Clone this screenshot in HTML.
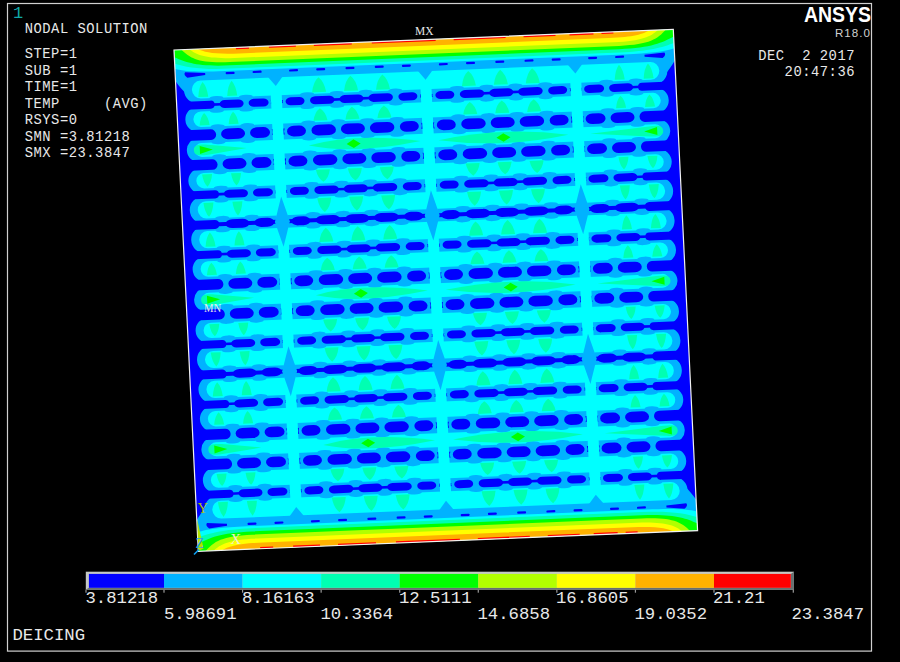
<!DOCTYPE html>
<html><head><meta charset="utf-8"><style>
html,body{margin:0;padding:0;background:#000;}
body{width:900px;height:662px;position:relative;overflow:hidden;}
.t{position:absolute;font-family:"Liberation Mono",monospace;color:#E8E8E8;white-space:pre;line-height:1;}
.h{font-size:13.8px;letter-spacing:0.52px;}
.l{font-size:17.3px;}
</style></head><body>
<svg width="900" height="662" style="position:absolute;left:0;top:0">
<defs><clipPath id="cp"><rect x="0" y="0" width="500" height="500"/></clipPath></defs>
<rect x="7.5" y="3.5" width="864" height="647.6" fill="none" stroke="#D0D0D0" stroke-width="1.2"/>
<g transform="matrix(0.9986,-0.0414,0.0486,1.0026,174,50)">
<g clip-path="url(#cp)">
<rect x="0.0" y="0.0" width="500.0" height="500.0" fill="#0000FF"/>
<rect x="8.0" y="26.5" width="484.0" height="27.9" fill="#00B2FF" rx="13.9" ry="13.9"/>
<rect x="8.0" y="57.4" width="484.0" height="25.4" fill="#00B2FF" rx="12.7" ry="12.7"/>
<rect x="8.0" y="88.7" width="484.0" height="23.9" fill="#00B2FF" rx="11.9" ry="11.9"/>
<rect x="8.0" y="118.6" width="484.0" height="25.4" fill="#00B2FF" rx="12.7" ry="12.7"/>
<rect x="8.0" y="146.9" width="484.0" height="27.1" fill="#00B2FF" rx="13.5" ry="13.5"/>
<rect x="8.0" y="176.6" width="484.0" height="27.1" fill="#00B2FF" rx="13.5" ry="13.5"/>
<rect x="8.0" y="206.7" width="484.0" height="25.4" fill="#00B2FF" rx="12.7" ry="12.7"/>
<rect x="8.0" y="238.0" width="484.0" height="23.9" fill="#00B2FF" rx="11.9" ry="11.9"/>
<rect x="8.0" y="267.9" width="484.0" height="25.4" fill="#00B2FF" rx="12.7" ry="12.7"/>
<rect x="8.0" y="296.2" width="484.0" height="27.1" fill="#00B2FF" rx="13.5" ry="13.5"/>
<rect x="8.0" y="325.9" width="484.0" height="27.1" fill="#00B2FF" rx="13.5" ry="13.5"/>
<rect x="8.0" y="356.0" width="484.0" height="25.4" fill="#00B2FF" rx="12.7" ry="12.7"/>
<rect x="8.0" y="387.3" width="484.0" height="23.9" fill="#00B2FF" rx="11.9" ry="11.9"/>
<rect x="8.0" y="417.2" width="484.0" height="25.4" fill="#00B2FF" rx="12.7" ry="12.7"/>
<rect x="8.0" y="445.5" width="484.0" height="27.9" fill="#00B2FF" rx="13.9" ry="13.9"/>
<rect x="20.0" y="49.4" width="74.5" height="13.0" fill="#00B2FF" rx="8.0" ry="6.5"/>
<rect x="106.0" y="49.4" width="138.0" height="13.0" fill="#00B2FF" rx="8.0" ry="6.5"/>
<rect x="256.0" y="49.4" width="138.0" height="13.0" fill="#00B2FF" rx="8.0" ry="6.5"/>
<rect x="405.5" y="49.4" width="74.5" height="13.0" fill="#00B2FF" rx="8.0" ry="6.5"/>
<rect x="20.0" y="77.7" width="74.5" height="16.0" fill="#00B2FF" rx="8.0" ry="8.0"/>
<rect x="106.0" y="77.7" width="138.0" height="16.0" fill="#00B2FF" rx="8.0" ry="8.0"/>
<rect x="256.0" y="77.7" width="138.0" height="16.0" fill="#00B2FF" rx="8.0" ry="8.0"/>
<rect x="405.5" y="77.7" width="74.5" height="16.0" fill="#00B2FF" rx="8.0" ry="8.0"/>
<rect x="20.0" y="107.6" width="74.5" height="16.0" fill="#00B2FF" rx="8.0" ry="8.0"/>
<rect x="106.0" y="107.6" width="138.0" height="16.0" fill="#00B2FF" rx="8.0" ry="8.0"/>
<rect x="256.0" y="107.6" width="138.0" height="16.0" fill="#00B2FF" rx="8.0" ry="8.0"/>
<rect x="405.5" y="107.6" width="74.5" height="16.0" fill="#00B2FF" rx="8.0" ry="8.0"/>
<rect x="20.0" y="138.9" width="74.5" height="13.0" fill="#00B2FF" rx="8.0" ry="6.5"/>
<rect x="106.0" y="138.9" width="138.0" height="13.0" fill="#00B2FF" rx="8.0" ry="6.5"/>
<rect x="256.0" y="138.9" width="138.0" height="13.0" fill="#00B2FF" rx="8.0" ry="6.5"/>
<rect x="405.5" y="138.9" width="74.5" height="13.0" fill="#00B2FF" rx="8.0" ry="6.5"/>
<rect x="20.0" y="169.0" width="74.5" height="12.6" fill="#00B2FF" rx="8.0" ry="6.3"/>
<rect x="106.0" y="169.0" width="138.0" height="12.6" fill="#00B2FF" rx="8.0" ry="6.3"/>
<rect x="256.0" y="169.0" width="138.0" height="12.6" fill="#00B2FF" rx="8.0" ry="6.3"/>
<rect x="405.5" y="169.0" width="74.5" height="12.6" fill="#00B2FF" rx="8.0" ry="6.3"/>
<rect x="20.0" y="198.7" width="74.5" height="13.0" fill="#00B2FF" rx="8.0" ry="6.5"/>
<rect x="106.0" y="198.7" width="138.0" height="13.0" fill="#00B2FF" rx="8.0" ry="6.5"/>
<rect x="256.0" y="198.7" width="138.0" height="13.0" fill="#00B2FF" rx="8.0" ry="6.5"/>
<rect x="405.5" y="198.7" width="74.5" height="13.0" fill="#00B2FF" rx="8.0" ry="6.5"/>
<rect x="20.0" y="227.0" width="74.5" height="16.0" fill="#00B2FF" rx="8.0" ry="8.0"/>
<rect x="106.0" y="227.0" width="138.0" height="16.0" fill="#00B2FF" rx="8.0" ry="8.0"/>
<rect x="256.0" y="227.0" width="138.0" height="16.0" fill="#00B2FF" rx="8.0" ry="8.0"/>
<rect x="405.5" y="227.0" width="74.5" height="16.0" fill="#00B2FF" rx="8.0" ry="8.0"/>
<rect x="20.0" y="256.9" width="74.5" height="16.0" fill="#00B2FF" rx="8.0" ry="8.0"/>
<rect x="106.0" y="256.9" width="138.0" height="16.0" fill="#00B2FF" rx="8.0" ry="8.0"/>
<rect x="256.0" y="256.9" width="138.0" height="16.0" fill="#00B2FF" rx="8.0" ry="8.0"/>
<rect x="405.5" y="256.9" width="74.5" height="16.0" fill="#00B2FF" rx="8.0" ry="8.0"/>
<rect x="20.0" y="288.2" width="74.5" height="13.0" fill="#00B2FF" rx="8.0" ry="6.5"/>
<rect x="106.0" y="288.2" width="138.0" height="13.0" fill="#00B2FF" rx="8.0" ry="6.5"/>
<rect x="256.0" y="288.2" width="138.0" height="13.0" fill="#00B2FF" rx="8.0" ry="6.5"/>
<rect x="405.5" y="288.2" width="74.5" height="13.0" fill="#00B2FF" rx="8.0" ry="6.5"/>
<rect x="20.0" y="318.3" width="74.5" height="12.6" fill="#00B2FF" rx="8.0" ry="6.3"/>
<rect x="106.0" y="318.3" width="138.0" height="12.6" fill="#00B2FF" rx="8.0" ry="6.3"/>
<rect x="256.0" y="318.3" width="138.0" height="12.6" fill="#00B2FF" rx="8.0" ry="6.3"/>
<rect x="405.5" y="318.3" width="74.5" height="12.6" fill="#00B2FF" rx="8.0" ry="6.3"/>
<rect x="20.0" y="348.0" width="74.5" height="13.0" fill="#00B2FF" rx="8.0" ry="6.5"/>
<rect x="106.0" y="348.0" width="138.0" height="13.0" fill="#00B2FF" rx="8.0" ry="6.5"/>
<rect x="256.0" y="348.0" width="138.0" height="13.0" fill="#00B2FF" rx="8.0" ry="6.5"/>
<rect x="405.5" y="348.0" width="74.5" height="13.0" fill="#00B2FF" rx="8.0" ry="6.5"/>
<rect x="20.0" y="376.3" width="74.5" height="16.0" fill="#00B2FF" rx="8.0" ry="8.0"/>
<rect x="106.0" y="376.3" width="138.0" height="16.0" fill="#00B2FF" rx="8.0" ry="8.0"/>
<rect x="256.0" y="376.3" width="138.0" height="16.0" fill="#00B2FF" rx="8.0" ry="8.0"/>
<rect x="405.5" y="376.3" width="74.5" height="16.0" fill="#00B2FF" rx="8.0" ry="8.0"/>
<rect x="20.0" y="406.2" width="74.5" height="16.0" fill="#00B2FF" rx="8.0" ry="8.0"/>
<rect x="106.0" y="406.2" width="138.0" height="16.0" fill="#00B2FF" rx="8.0" ry="8.0"/>
<rect x="256.0" y="406.2" width="138.0" height="16.0" fill="#00B2FF" rx="8.0" ry="8.0"/>
<rect x="405.5" y="406.2" width="74.5" height="16.0" fill="#00B2FF" rx="8.0" ry="8.0"/>
<rect x="20.0" y="437.5" width="74.5" height="13.0" fill="#00B2FF" rx="8.0" ry="6.5"/>
<rect x="106.0" y="437.5" width="138.0" height="13.0" fill="#00B2FF" rx="8.0" ry="6.5"/>
<rect x="256.0" y="437.5" width="138.0" height="13.0" fill="#00B2FF" rx="8.0" ry="6.5"/>
<rect x="405.5" y="437.5" width="74.5" height="13.0" fill="#00B2FF" rx="8.0" ry="6.5"/>
<rect x="0.0" y="0.0" width="500.0" height="31.0" fill="#00B2FF"/>
<rect x="0.0" y="469.0" width="500.0" height="31.0" fill="#00B2FF"/>
<path d="M0,29 L0,31 C3,36 7,41 11,45 L30,45 L30,29 Z M500,29 L500,31 C497,36 493,41 489,45 L470,45 L470,29 Z" fill="#00B2FF"/>
<path d="M0,29 L0,31 C3,36 7,41 11,45 L30,45 L30,29 Z M500,29 L500,31 C497,36 493,41 489,45 L470,45 L470,29 Z" fill="#00B2FF" transform="matrix(1,0,0,-1,0,500)"/>
<rect x="43.0" y="51.9" width="24.0" height="8.0" fill="#0000FF" rx="5.2" ry="4.0"/>
<rect x="72.0" y="51.9" width="20.0" height="8.0" fill="#0000FF" rx="5.2" ry="4.0"/>
<rect x="109.0" y="51.9" width="19.0" height="8.0" fill="#0000FF" rx="5.2" ry="4.0"/>
<rect x="133.5" y="51.9" width="24.5" height="8.0" fill="#0000FF" rx="5.2" ry="4.0"/>
<rect x="163.0" y="51.9" width="24.0" height="8.0" fill="#0000FF" rx="5.2" ry="4.0"/>
<rect x="192.0" y="51.9" width="24.5" height="8.0" fill="#0000FF" rx="5.2" ry="4.0"/>
<rect x="222.0" y="51.9" width="19.0" height="8.0" fill="#0000FF" rx="5.2" ry="4.0"/>
<rect x="259.0" y="51.9" width="19.0" height="8.0" fill="#0000FF" rx="5.2" ry="4.0"/>
<rect x="283.5" y="51.9" width="24.5" height="8.0" fill="#0000FF" rx="5.2" ry="4.0"/>
<rect x="313.0" y="51.9" width="24.0" height="8.0" fill="#0000FF" rx="5.2" ry="4.0"/>
<rect x="342.0" y="51.9" width="24.5" height="8.0" fill="#0000FF" rx="5.2" ry="4.0"/>
<rect x="372.0" y="51.9" width="19.0" height="8.0" fill="#0000FF" rx="5.2" ry="4.0"/>
<rect x="408.0" y="51.9" width="20.0" height="8.0" fill="#0000FF" rx="5.2" ry="4.0"/>
<rect x="433.0" y="51.9" width="24.0" height="8.0" fill="#0000FF" rx="5.2" ry="4.0"/>
<rect x="-10.0" y="51.9" width="48.0" height="8.0" fill="#0000FF" rx="4.0" ry="4.0"/>
<rect x="462.0" y="51.9" width="48.0" height="8.0" fill="#0000FF" rx="4.0" ry="4.0"/>
<rect x="156.0" y="54.6" width="9.0" height="2.6" fill="#0000FF"/>
<rect x="185.0" y="54.6" width="9.0" height="2.6" fill="#0000FF"/>
<rect x="306.0" y="54.6" width="9.0" height="2.6" fill="#0000FF"/>
<rect x="335.0" y="54.6" width="9.0" height="2.6" fill="#0000FF"/>
<rect x="35.0" y="54.6" width="10.0" height="2.6" fill="#0000FF"/>
<rect x="455.0" y="54.6" width="10.0" height="2.6" fill="#0000FF"/>
<rect x="43.0" y="80.4" width="24.0" height="10.6" fill="#0000FF" rx="6.9" ry="5.3"/>
<rect x="72.0" y="80.4" width="20.0" height="10.6" fill="#0000FF" rx="6.9" ry="5.3"/>
<rect x="109.0" y="80.4" width="19.0" height="10.6" fill="#0000FF" rx="6.9" ry="5.3"/>
<rect x="133.5" y="80.4" width="24.5" height="10.6" fill="#0000FF" rx="6.9" ry="5.3"/>
<rect x="163.0" y="80.4" width="24.0" height="10.6" fill="#0000FF" rx="6.9" ry="5.3"/>
<rect x="192.0" y="80.4" width="24.5" height="10.6" fill="#0000FF" rx="6.9" ry="5.3"/>
<rect x="222.0" y="80.4" width="19.0" height="10.6" fill="#0000FF" rx="6.9" ry="5.3"/>
<rect x="259.0" y="80.4" width="19.0" height="10.6" fill="#0000FF" rx="6.9" ry="5.3"/>
<rect x="283.5" y="80.4" width="24.5" height="10.6" fill="#0000FF" rx="6.9" ry="5.3"/>
<rect x="313.0" y="80.4" width="24.0" height="10.6" fill="#0000FF" rx="6.9" ry="5.3"/>
<rect x="342.0" y="80.4" width="24.5" height="10.6" fill="#0000FF" rx="6.9" ry="5.3"/>
<rect x="372.0" y="80.4" width="19.0" height="10.6" fill="#0000FF" rx="6.9" ry="5.3"/>
<rect x="408.0" y="80.4" width="20.0" height="10.6" fill="#0000FF" rx="6.9" ry="5.3"/>
<rect x="433.0" y="80.4" width="24.0" height="10.6" fill="#0000FF" rx="6.9" ry="5.3"/>
<rect x="-10.0" y="80.4" width="48.0" height="10.6" fill="#0000FF" rx="5.3" ry="5.3"/>
<rect x="462.0" y="80.4" width="48.0" height="10.6" fill="#0000FF" rx="5.3" ry="5.3"/>
<rect x="43.0" y="110.3" width="24.0" height="10.6" fill="#0000FF" rx="6.9" ry="5.3"/>
<rect x="72.0" y="110.3" width="20.0" height="10.6" fill="#0000FF" rx="6.9" ry="5.3"/>
<rect x="109.0" y="110.3" width="19.0" height="10.6" fill="#0000FF" rx="6.9" ry="5.3"/>
<rect x="133.5" y="110.3" width="24.5" height="10.6" fill="#0000FF" rx="6.9" ry="5.3"/>
<rect x="163.0" y="110.3" width="24.0" height="10.6" fill="#0000FF" rx="6.9" ry="5.3"/>
<rect x="192.0" y="110.3" width="24.5" height="10.6" fill="#0000FF" rx="6.9" ry="5.3"/>
<rect x="222.0" y="110.3" width="19.0" height="10.6" fill="#0000FF" rx="6.9" ry="5.3"/>
<rect x="259.0" y="110.3" width="19.0" height="10.6" fill="#0000FF" rx="6.9" ry="5.3"/>
<rect x="283.5" y="110.3" width="24.5" height="10.6" fill="#0000FF" rx="6.9" ry="5.3"/>
<rect x="313.0" y="110.3" width="24.0" height="10.6" fill="#0000FF" rx="6.9" ry="5.3"/>
<rect x="342.0" y="110.3" width="24.5" height="10.6" fill="#0000FF" rx="6.9" ry="5.3"/>
<rect x="372.0" y="110.3" width="19.0" height="10.6" fill="#0000FF" rx="6.9" ry="5.3"/>
<rect x="408.0" y="110.3" width="20.0" height="10.6" fill="#0000FF" rx="6.9" ry="5.3"/>
<rect x="433.0" y="110.3" width="24.0" height="10.6" fill="#0000FF" rx="6.9" ry="5.3"/>
<rect x="-10.0" y="110.3" width="48.0" height="10.6" fill="#0000FF" rx="5.3" ry="5.3"/>
<rect x="462.0" y="110.3" width="48.0" height="10.6" fill="#0000FF" rx="5.3" ry="5.3"/>
<rect x="43.0" y="141.4" width="24.0" height="8.0" fill="#0000FF" rx="5.2" ry="4.0"/>
<rect x="72.0" y="141.4" width="20.0" height="8.0" fill="#0000FF" rx="5.2" ry="4.0"/>
<rect x="109.0" y="141.4" width="19.0" height="8.0" fill="#0000FF" rx="5.2" ry="4.0"/>
<rect x="133.5" y="141.4" width="24.5" height="8.0" fill="#0000FF" rx="5.2" ry="4.0"/>
<rect x="163.0" y="141.4" width="24.0" height="8.0" fill="#0000FF" rx="5.2" ry="4.0"/>
<rect x="192.0" y="141.4" width="24.5" height="8.0" fill="#0000FF" rx="5.2" ry="4.0"/>
<rect x="222.0" y="141.4" width="19.0" height="8.0" fill="#0000FF" rx="5.2" ry="4.0"/>
<rect x="259.0" y="141.4" width="19.0" height="8.0" fill="#0000FF" rx="5.2" ry="4.0"/>
<rect x="283.5" y="141.4" width="24.5" height="8.0" fill="#0000FF" rx="5.2" ry="4.0"/>
<rect x="313.0" y="141.4" width="24.0" height="8.0" fill="#0000FF" rx="5.2" ry="4.0"/>
<rect x="342.0" y="141.4" width="24.5" height="8.0" fill="#0000FF" rx="5.2" ry="4.0"/>
<rect x="372.0" y="141.4" width="19.0" height="8.0" fill="#0000FF" rx="5.2" ry="4.0"/>
<rect x="408.0" y="141.4" width="20.0" height="8.0" fill="#0000FF" rx="5.2" ry="4.0"/>
<rect x="433.0" y="141.4" width="24.0" height="8.0" fill="#0000FF" rx="5.2" ry="4.0"/>
<rect x="-10.0" y="141.4" width="48.0" height="8.0" fill="#0000FF" rx="4.0" ry="4.0"/>
<rect x="462.0" y="141.4" width="48.0" height="8.0" fill="#0000FF" rx="4.0" ry="4.0"/>
<rect x="156.0" y="144.1" width="9.0" height="2.6" fill="#0000FF"/>
<rect x="185.0" y="144.1" width="9.0" height="2.6" fill="#0000FF"/>
<rect x="306.0" y="144.1" width="9.0" height="2.6" fill="#0000FF"/>
<rect x="335.0" y="144.1" width="9.0" height="2.6" fill="#0000FF"/>
<rect x="35.0" y="144.1" width="10.0" height="2.6" fill="#0000FF"/>
<rect x="455.0" y="144.1" width="10.0" height="2.6" fill="#0000FF"/>
<rect x="0.0" y="173.3" width="94.0" height="4.0" fill="#0000FF"/>
<rect x="106.0" y="173.3" width="138.0" height="4.0" fill="#0000FF"/>
<rect x="256.0" y="173.3" width="138.0" height="4.0" fill="#0000FF"/>
<rect x="406.0" y="173.3" width="94.0" height="4.0" fill="#0000FF"/>
<rect x="43.0" y="170.9" width="24.0" height="8.8" fill="#0000FF" rx="7.0" ry="4.4"/>
<rect x="72.0" y="170.9" width="20.0" height="8.8" fill="#0000FF" rx="7.0" ry="4.4"/>
<rect x="109.0" y="170.9" width="19.0" height="8.8" fill="#0000FF" rx="7.0" ry="4.4"/>
<rect x="133.5" y="170.9" width="24.5" height="8.8" fill="#0000FF" rx="7.0" ry="4.4"/>
<rect x="163.0" y="170.9" width="24.0" height="8.8" fill="#0000FF" rx="7.0" ry="4.4"/>
<rect x="192.0" y="170.9" width="24.5" height="8.8" fill="#0000FF" rx="7.0" ry="4.4"/>
<rect x="222.0" y="170.9" width="19.0" height="8.8" fill="#0000FF" rx="7.0" ry="4.4"/>
<rect x="259.0" y="170.9" width="19.0" height="8.8" fill="#0000FF" rx="7.0" ry="4.4"/>
<rect x="283.5" y="170.9" width="24.5" height="8.8" fill="#0000FF" rx="7.0" ry="4.4"/>
<rect x="313.0" y="170.9" width="24.0" height="8.8" fill="#0000FF" rx="7.0" ry="4.4"/>
<rect x="342.0" y="170.9" width="24.5" height="8.8" fill="#0000FF" rx="7.0" ry="4.4"/>
<rect x="372.0" y="170.9" width="19.0" height="8.8" fill="#0000FF" rx="7.0" ry="4.4"/>
<rect x="408.0" y="170.9" width="20.0" height="8.8" fill="#0000FF" rx="7.0" ry="4.4"/>
<rect x="433.0" y="170.9" width="24.0" height="8.8" fill="#0000FF" rx="7.0" ry="4.4"/>
<rect x="-10.0" y="170.8" width="47.0" height="9.0" fill="#0000FF" rx="4.5" ry="4.5"/>
<rect x="463.0" y="170.8" width="47.0" height="9.0" fill="#0000FF" rx="4.5" ry="4.5"/>
<rect x="43.0" y="201.2" width="24.0" height="8.0" fill="#0000FF" rx="5.2" ry="4.0"/>
<rect x="72.0" y="201.2" width="20.0" height="8.0" fill="#0000FF" rx="5.2" ry="4.0"/>
<rect x="109.0" y="201.2" width="19.0" height="8.0" fill="#0000FF" rx="5.2" ry="4.0"/>
<rect x="133.5" y="201.2" width="24.5" height="8.0" fill="#0000FF" rx="5.2" ry="4.0"/>
<rect x="163.0" y="201.2" width="24.0" height="8.0" fill="#0000FF" rx="5.2" ry="4.0"/>
<rect x="192.0" y="201.2" width="24.5" height="8.0" fill="#0000FF" rx="5.2" ry="4.0"/>
<rect x="222.0" y="201.2" width="19.0" height="8.0" fill="#0000FF" rx="5.2" ry="4.0"/>
<rect x="259.0" y="201.2" width="19.0" height="8.0" fill="#0000FF" rx="5.2" ry="4.0"/>
<rect x="283.5" y="201.2" width="24.5" height="8.0" fill="#0000FF" rx="5.2" ry="4.0"/>
<rect x="313.0" y="201.2" width="24.0" height="8.0" fill="#0000FF" rx="5.2" ry="4.0"/>
<rect x="342.0" y="201.2" width="24.5" height="8.0" fill="#0000FF" rx="5.2" ry="4.0"/>
<rect x="372.0" y="201.2" width="19.0" height="8.0" fill="#0000FF" rx="5.2" ry="4.0"/>
<rect x="408.0" y="201.2" width="20.0" height="8.0" fill="#0000FF" rx="5.2" ry="4.0"/>
<rect x="433.0" y="201.2" width="24.0" height="8.0" fill="#0000FF" rx="5.2" ry="4.0"/>
<rect x="-10.0" y="201.2" width="48.0" height="8.0" fill="#0000FF" rx="4.0" ry="4.0"/>
<rect x="462.0" y="201.2" width="48.0" height="8.0" fill="#0000FF" rx="4.0" ry="4.0"/>
<rect x="156.0" y="203.9" width="9.0" height="2.6" fill="#0000FF"/>
<rect x="185.0" y="203.9" width="9.0" height="2.6" fill="#0000FF"/>
<rect x="306.0" y="203.9" width="9.0" height="2.6" fill="#0000FF"/>
<rect x="335.0" y="203.9" width="9.0" height="2.6" fill="#0000FF"/>
<rect x="35.0" y="203.9" width="10.0" height="2.6" fill="#0000FF"/>
<rect x="455.0" y="203.9" width="10.0" height="2.6" fill="#0000FF"/>
<rect x="43.0" y="229.7" width="24.0" height="10.6" fill="#0000FF" rx="6.9" ry="5.3"/>
<rect x="72.0" y="229.7" width="20.0" height="10.6" fill="#0000FF" rx="6.9" ry="5.3"/>
<rect x="109.0" y="229.7" width="19.0" height="10.6" fill="#0000FF" rx="6.9" ry="5.3"/>
<rect x="133.5" y="229.7" width="24.5" height="10.6" fill="#0000FF" rx="6.9" ry="5.3"/>
<rect x="163.0" y="229.7" width="24.0" height="10.6" fill="#0000FF" rx="6.9" ry="5.3"/>
<rect x="192.0" y="229.7" width="24.5" height="10.6" fill="#0000FF" rx="6.9" ry="5.3"/>
<rect x="222.0" y="229.7" width="19.0" height="10.6" fill="#0000FF" rx="6.9" ry="5.3"/>
<rect x="259.0" y="229.7" width="19.0" height="10.6" fill="#0000FF" rx="6.9" ry="5.3"/>
<rect x="283.5" y="229.7" width="24.5" height="10.6" fill="#0000FF" rx="6.9" ry="5.3"/>
<rect x="313.0" y="229.7" width="24.0" height="10.6" fill="#0000FF" rx="6.9" ry="5.3"/>
<rect x="342.0" y="229.7" width="24.5" height="10.6" fill="#0000FF" rx="6.9" ry="5.3"/>
<rect x="372.0" y="229.7" width="19.0" height="10.6" fill="#0000FF" rx="6.9" ry="5.3"/>
<rect x="408.0" y="229.7" width="20.0" height="10.6" fill="#0000FF" rx="6.9" ry="5.3"/>
<rect x="433.0" y="229.7" width="24.0" height="10.6" fill="#0000FF" rx="6.9" ry="5.3"/>
<rect x="-10.0" y="229.7" width="48.0" height="10.6" fill="#0000FF" rx="5.3" ry="5.3"/>
<rect x="462.0" y="229.7" width="48.0" height="10.6" fill="#0000FF" rx="5.3" ry="5.3"/>
<rect x="43.0" y="259.6" width="24.0" height="10.6" fill="#0000FF" rx="6.9" ry="5.3"/>
<rect x="72.0" y="259.6" width="20.0" height="10.6" fill="#0000FF" rx="6.9" ry="5.3"/>
<rect x="109.0" y="259.6" width="19.0" height="10.6" fill="#0000FF" rx="6.9" ry="5.3"/>
<rect x="133.5" y="259.6" width="24.5" height="10.6" fill="#0000FF" rx="6.9" ry="5.3"/>
<rect x="163.0" y="259.6" width="24.0" height="10.6" fill="#0000FF" rx="6.9" ry="5.3"/>
<rect x="192.0" y="259.6" width="24.5" height="10.6" fill="#0000FF" rx="6.9" ry="5.3"/>
<rect x="222.0" y="259.6" width="19.0" height="10.6" fill="#0000FF" rx="6.9" ry="5.3"/>
<rect x="259.0" y="259.6" width="19.0" height="10.6" fill="#0000FF" rx="6.9" ry="5.3"/>
<rect x="283.5" y="259.6" width="24.5" height="10.6" fill="#0000FF" rx="6.9" ry="5.3"/>
<rect x="313.0" y="259.6" width="24.0" height="10.6" fill="#0000FF" rx="6.9" ry="5.3"/>
<rect x="342.0" y="259.6" width="24.5" height="10.6" fill="#0000FF" rx="6.9" ry="5.3"/>
<rect x="372.0" y="259.6" width="19.0" height="10.6" fill="#0000FF" rx="6.9" ry="5.3"/>
<rect x="408.0" y="259.6" width="20.0" height="10.6" fill="#0000FF" rx="6.9" ry="5.3"/>
<rect x="433.0" y="259.6" width="24.0" height="10.6" fill="#0000FF" rx="6.9" ry="5.3"/>
<rect x="-10.0" y="259.6" width="48.0" height="10.6" fill="#0000FF" rx="5.3" ry="5.3"/>
<rect x="462.0" y="259.6" width="48.0" height="10.6" fill="#0000FF" rx="5.3" ry="5.3"/>
<rect x="43.0" y="290.7" width="24.0" height="8.0" fill="#0000FF" rx="5.2" ry="4.0"/>
<rect x="72.0" y="290.7" width="20.0" height="8.0" fill="#0000FF" rx="5.2" ry="4.0"/>
<rect x="109.0" y="290.7" width="19.0" height="8.0" fill="#0000FF" rx="5.2" ry="4.0"/>
<rect x="133.5" y="290.7" width="24.5" height="8.0" fill="#0000FF" rx="5.2" ry="4.0"/>
<rect x="163.0" y="290.7" width="24.0" height="8.0" fill="#0000FF" rx="5.2" ry="4.0"/>
<rect x="192.0" y="290.7" width="24.5" height="8.0" fill="#0000FF" rx="5.2" ry="4.0"/>
<rect x="222.0" y="290.7" width="19.0" height="8.0" fill="#0000FF" rx="5.2" ry="4.0"/>
<rect x="259.0" y="290.7" width="19.0" height="8.0" fill="#0000FF" rx="5.2" ry="4.0"/>
<rect x="283.5" y="290.7" width="24.5" height="8.0" fill="#0000FF" rx="5.2" ry="4.0"/>
<rect x="313.0" y="290.7" width="24.0" height="8.0" fill="#0000FF" rx="5.2" ry="4.0"/>
<rect x="342.0" y="290.7" width="24.5" height="8.0" fill="#0000FF" rx="5.2" ry="4.0"/>
<rect x="372.0" y="290.7" width="19.0" height="8.0" fill="#0000FF" rx="5.2" ry="4.0"/>
<rect x="408.0" y="290.7" width="20.0" height="8.0" fill="#0000FF" rx="5.2" ry="4.0"/>
<rect x="433.0" y="290.7" width="24.0" height="8.0" fill="#0000FF" rx="5.2" ry="4.0"/>
<rect x="-10.0" y="290.7" width="48.0" height="8.0" fill="#0000FF" rx="4.0" ry="4.0"/>
<rect x="462.0" y="290.7" width="48.0" height="8.0" fill="#0000FF" rx="4.0" ry="4.0"/>
<rect x="156.0" y="293.4" width="9.0" height="2.6" fill="#0000FF"/>
<rect x="185.0" y="293.4" width="9.0" height="2.6" fill="#0000FF"/>
<rect x="306.0" y="293.4" width="9.0" height="2.6" fill="#0000FF"/>
<rect x="335.0" y="293.4" width="9.0" height="2.6" fill="#0000FF"/>
<rect x="35.0" y="293.4" width="10.0" height="2.6" fill="#0000FF"/>
<rect x="455.0" y="293.4" width="10.0" height="2.6" fill="#0000FF"/>
<rect x="0.0" y="322.6" width="94.0" height="4.0" fill="#0000FF"/>
<rect x="106.0" y="322.6" width="138.0" height="4.0" fill="#0000FF"/>
<rect x="256.0" y="322.6" width="138.0" height="4.0" fill="#0000FF"/>
<rect x="406.0" y="322.6" width="94.0" height="4.0" fill="#0000FF"/>
<rect x="43.0" y="320.2" width="24.0" height="8.8" fill="#0000FF" rx="7.0" ry="4.4"/>
<rect x="72.0" y="320.2" width="20.0" height="8.8" fill="#0000FF" rx="7.0" ry="4.4"/>
<rect x="109.0" y="320.2" width="19.0" height="8.8" fill="#0000FF" rx="7.0" ry="4.4"/>
<rect x="133.5" y="320.2" width="24.5" height="8.8" fill="#0000FF" rx="7.0" ry="4.4"/>
<rect x="163.0" y="320.2" width="24.0" height="8.8" fill="#0000FF" rx="7.0" ry="4.4"/>
<rect x="192.0" y="320.2" width="24.5" height="8.8" fill="#0000FF" rx="7.0" ry="4.4"/>
<rect x="222.0" y="320.2" width="19.0" height="8.8" fill="#0000FF" rx="7.0" ry="4.4"/>
<rect x="259.0" y="320.2" width="19.0" height="8.8" fill="#0000FF" rx="7.0" ry="4.4"/>
<rect x="283.5" y="320.2" width="24.5" height="8.8" fill="#0000FF" rx="7.0" ry="4.4"/>
<rect x="313.0" y="320.2" width="24.0" height="8.8" fill="#0000FF" rx="7.0" ry="4.4"/>
<rect x="342.0" y="320.2" width="24.5" height="8.8" fill="#0000FF" rx="7.0" ry="4.4"/>
<rect x="372.0" y="320.2" width="19.0" height="8.8" fill="#0000FF" rx="7.0" ry="4.4"/>
<rect x="408.0" y="320.2" width="20.0" height="8.8" fill="#0000FF" rx="7.0" ry="4.4"/>
<rect x="433.0" y="320.2" width="24.0" height="8.8" fill="#0000FF" rx="7.0" ry="4.4"/>
<rect x="-10.0" y="320.1" width="47.0" height="9.0" fill="#0000FF" rx="4.5" ry="4.5"/>
<rect x="463.0" y="320.1" width="47.0" height="9.0" fill="#0000FF" rx="4.5" ry="4.5"/>
<rect x="43.0" y="350.5" width="24.0" height="8.0" fill="#0000FF" rx="5.2" ry="4.0"/>
<rect x="72.0" y="350.5" width="20.0" height="8.0" fill="#0000FF" rx="5.2" ry="4.0"/>
<rect x="109.0" y="350.5" width="19.0" height="8.0" fill="#0000FF" rx="5.2" ry="4.0"/>
<rect x="133.5" y="350.5" width="24.5" height="8.0" fill="#0000FF" rx="5.2" ry="4.0"/>
<rect x="163.0" y="350.5" width="24.0" height="8.0" fill="#0000FF" rx="5.2" ry="4.0"/>
<rect x="192.0" y="350.5" width="24.5" height="8.0" fill="#0000FF" rx="5.2" ry="4.0"/>
<rect x="222.0" y="350.5" width="19.0" height="8.0" fill="#0000FF" rx="5.2" ry="4.0"/>
<rect x="259.0" y="350.5" width="19.0" height="8.0" fill="#0000FF" rx="5.2" ry="4.0"/>
<rect x="283.5" y="350.5" width="24.5" height="8.0" fill="#0000FF" rx="5.2" ry="4.0"/>
<rect x="313.0" y="350.5" width="24.0" height="8.0" fill="#0000FF" rx="5.2" ry="4.0"/>
<rect x="342.0" y="350.5" width="24.5" height="8.0" fill="#0000FF" rx="5.2" ry="4.0"/>
<rect x="372.0" y="350.5" width="19.0" height="8.0" fill="#0000FF" rx="5.2" ry="4.0"/>
<rect x="408.0" y="350.5" width="20.0" height="8.0" fill="#0000FF" rx="5.2" ry="4.0"/>
<rect x="433.0" y="350.5" width="24.0" height="8.0" fill="#0000FF" rx="5.2" ry="4.0"/>
<rect x="-10.0" y="350.5" width="48.0" height="8.0" fill="#0000FF" rx="4.0" ry="4.0"/>
<rect x="462.0" y="350.5" width="48.0" height="8.0" fill="#0000FF" rx="4.0" ry="4.0"/>
<rect x="156.0" y="353.2" width="9.0" height="2.6" fill="#0000FF"/>
<rect x="185.0" y="353.2" width="9.0" height="2.6" fill="#0000FF"/>
<rect x="306.0" y="353.2" width="9.0" height="2.6" fill="#0000FF"/>
<rect x="335.0" y="353.2" width="9.0" height="2.6" fill="#0000FF"/>
<rect x="35.0" y="353.2" width="10.0" height="2.6" fill="#0000FF"/>
<rect x="455.0" y="353.2" width="10.0" height="2.6" fill="#0000FF"/>
<rect x="43.0" y="379.0" width="24.0" height="10.6" fill="#0000FF" rx="6.9" ry="5.3"/>
<rect x="72.0" y="379.0" width="20.0" height="10.6" fill="#0000FF" rx="6.9" ry="5.3"/>
<rect x="109.0" y="379.0" width="19.0" height="10.6" fill="#0000FF" rx="6.9" ry="5.3"/>
<rect x="133.5" y="379.0" width="24.5" height="10.6" fill="#0000FF" rx="6.9" ry="5.3"/>
<rect x="163.0" y="379.0" width="24.0" height="10.6" fill="#0000FF" rx="6.9" ry="5.3"/>
<rect x="192.0" y="379.0" width="24.5" height="10.6" fill="#0000FF" rx="6.9" ry="5.3"/>
<rect x="222.0" y="379.0" width="19.0" height="10.6" fill="#0000FF" rx="6.9" ry="5.3"/>
<rect x="259.0" y="379.0" width="19.0" height="10.6" fill="#0000FF" rx="6.9" ry="5.3"/>
<rect x="283.5" y="379.0" width="24.5" height="10.6" fill="#0000FF" rx="6.9" ry="5.3"/>
<rect x="313.0" y="379.0" width="24.0" height="10.6" fill="#0000FF" rx="6.9" ry="5.3"/>
<rect x="342.0" y="379.0" width="24.5" height="10.6" fill="#0000FF" rx="6.9" ry="5.3"/>
<rect x="372.0" y="379.0" width="19.0" height="10.6" fill="#0000FF" rx="6.9" ry="5.3"/>
<rect x="408.0" y="379.0" width="20.0" height="10.6" fill="#0000FF" rx="6.9" ry="5.3"/>
<rect x="433.0" y="379.0" width="24.0" height="10.6" fill="#0000FF" rx="6.9" ry="5.3"/>
<rect x="-10.0" y="379.0" width="48.0" height="10.6" fill="#0000FF" rx="5.3" ry="5.3"/>
<rect x="462.0" y="379.0" width="48.0" height="10.6" fill="#0000FF" rx="5.3" ry="5.3"/>
<rect x="43.0" y="408.9" width="24.0" height="10.6" fill="#0000FF" rx="6.9" ry="5.3"/>
<rect x="72.0" y="408.9" width="20.0" height="10.6" fill="#0000FF" rx="6.9" ry="5.3"/>
<rect x="109.0" y="408.9" width="19.0" height="10.6" fill="#0000FF" rx="6.9" ry="5.3"/>
<rect x="133.5" y="408.9" width="24.5" height="10.6" fill="#0000FF" rx="6.9" ry="5.3"/>
<rect x="163.0" y="408.9" width="24.0" height="10.6" fill="#0000FF" rx="6.9" ry="5.3"/>
<rect x="192.0" y="408.9" width="24.5" height="10.6" fill="#0000FF" rx="6.9" ry="5.3"/>
<rect x="222.0" y="408.9" width="19.0" height="10.6" fill="#0000FF" rx="6.9" ry="5.3"/>
<rect x="259.0" y="408.9" width="19.0" height="10.6" fill="#0000FF" rx="6.9" ry="5.3"/>
<rect x="283.5" y="408.9" width="24.5" height="10.6" fill="#0000FF" rx="6.9" ry="5.3"/>
<rect x="313.0" y="408.9" width="24.0" height="10.6" fill="#0000FF" rx="6.9" ry="5.3"/>
<rect x="342.0" y="408.9" width="24.5" height="10.6" fill="#0000FF" rx="6.9" ry="5.3"/>
<rect x="372.0" y="408.9" width="19.0" height="10.6" fill="#0000FF" rx="6.9" ry="5.3"/>
<rect x="408.0" y="408.9" width="20.0" height="10.6" fill="#0000FF" rx="6.9" ry="5.3"/>
<rect x="433.0" y="408.9" width="24.0" height="10.6" fill="#0000FF" rx="6.9" ry="5.3"/>
<rect x="-10.0" y="408.9" width="48.0" height="10.6" fill="#0000FF" rx="5.3" ry="5.3"/>
<rect x="462.0" y="408.9" width="48.0" height="10.6" fill="#0000FF" rx="5.3" ry="5.3"/>
<rect x="43.0" y="440.0" width="24.0" height="8.0" fill="#0000FF" rx="5.2" ry="4.0"/>
<rect x="72.0" y="440.0" width="20.0" height="8.0" fill="#0000FF" rx="5.2" ry="4.0"/>
<rect x="109.0" y="440.0" width="19.0" height="8.0" fill="#0000FF" rx="5.2" ry="4.0"/>
<rect x="133.5" y="440.0" width="24.5" height="8.0" fill="#0000FF" rx="5.2" ry="4.0"/>
<rect x="163.0" y="440.0" width="24.0" height="8.0" fill="#0000FF" rx="5.2" ry="4.0"/>
<rect x="192.0" y="440.0" width="24.5" height="8.0" fill="#0000FF" rx="5.2" ry="4.0"/>
<rect x="222.0" y="440.0" width="19.0" height="8.0" fill="#0000FF" rx="5.2" ry="4.0"/>
<rect x="259.0" y="440.0" width="19.0" height="8.0" fill="#0000FF" rx="5.2" ry="4.0"/>
<rect x="283.5" y="440.0" width="24.5" height="8.0" fill="#0000FF" rx="5.2" ry="4.0"/>
<rect x="313.0" y="440.0" width="24.0" height="8.0" fill="#0000FF" rx="5.2" ry="4.0"/>
<rect x="342.0" y="440.0" width="24.5" height="8.0" fill="#0000FF" rx="5.2" ry="4.0"/>
<rect x="372.0" y="440.0" width="19.0" height="8.0" fill="#0000FF" rx="5.2" ry="4.0"/>
<rect x="408.0" y="440.0" width="20.0" height="8.0" fill="#0000FF" rx="5.2" ry="4.0"/>
<rect x="433.0" y="440.0" width="24.0" height="8.0" fill="#0000FF" rx="5.2" ry="4.0"/>
<rect x="-10.0" y="440.0" width="48.0" height="8.0" fill="#0000FF" rx="4.0" ry="4.0"/>
<rect x="462.0" y="440.0" width="48.0" height="8.0" fill="#0000FF" rx="4.0" ry="4.0"/>
<rect x="156.0" y="442.7" width="9.0" height="2.6" fill="#0000FF"/>
<rect x="185.0" y="442.7" width="9.0" height="2.6" fill="#0000FF"/>
<rect x="306.0" y="442.7" width="9.0" height="2.6" fill="#0000FF"/>
<rect x="335.0" y="442.7" width="9.0" height="2.6" fill="#0000FF"/>
<rect x="35.0" y="442.7" width="10.0" height="2.6" fill="#0000FF"/>
<rect x="455.0" y="442.7" width="10.0" height="2.6" fill="#0000FF"/>
<rect x="50.5" y="24.1" width="9.0" height="2.2" fill="#0000FF" rx="1.0" ry="1.0"/>
<rect x="77.5" y="24.1" width="9.0" height="2.2" fill="#0000FF" rx="1.0" ry="1.0"/>
<rect x="114.0" y="24.1" width="9.0" height="2.2" fill="#0000FF" rx="1.0" ry="1.0"/>
<rect x="141.2" y="24.1" width="9.0" height="2.2" fill="#0000FF" rx="1.0" ry="1.0"/>
<rect x="170.5" y="24.1" width="9.0" height="2.2" fill="#0000FF" rx="1.0" ry="1.0"/>
<rect x="199.8" y="24.1" width="9.0" height="2.2" fill="#0000FF" rx="1.0" ry="1.0"/>
<rect x="227.0" y="24.1" width="9.0" height="2.2" fill="#0000FF" rx="1.0" ry="1.0"/>
<rect x="264.0" y="24.1" width="9.0" height="2.2" fill="#0000FF" rx="1.0" ry="1.0"/>
<rect x="291.2" y="24.1" width="9.0" height="2.2" fill="#0000FF" rx="1.0" ry="1.0"/>
<rect x="320.5" y="24.1" width="9.0" height="2.2" fill="#0000FF" rx="1.0" ry="1.0"/>
<rect x="349.8" y="24.1" width="9.0" height="2.2" fill="#0000FF" rx="1.0" ry="1.0"/>
<rect x="377.0" y="24.1" width="9.0" height="2.2" fill="#0000FF" rx="1.0" ry="1.0"/>
<rect x="413.5" y="24.1" width="9.0" height="2.2" fill="#0000FF" rx="1.0" ry="1.0"/>
<rect x="440.5" y="24.1" width="9.0" height="2.2" fill="#0000FF" rx="1.0" ry="1.0"/>
<path d="M10,22.7 L30,24.2 L30,26.2 L12,28.2 Q8,25.2 10,22.7Z" fill="#0000FF"/>
<path d="M490,22.7 L470,24.2 L470,26.2 L488,28.2 Q492,25.2 490,22.7Z" fill="#0000FF"/>
<rect x="50.5" y="473.7" width="9.0" height="2.2" fill="#0000FF" rx="1.0" ry="1.0"/>
<rect x="77.5" y="473.7" width="9.0" height="2.2" fill="#0000FF" rx="1.0" ry="1.0"/>
<rect x="114.0" y="473.7" width="9.0" height="2.2" fill="#0000FF" rx="1.0" ry="1.0"/>
<rect x="141.2" y="473.7" width="9.0" height="2.2" fill="#0000FF" rx="1.0" ry="1.0"/>
<rect x="170.5" y="473.7" width="9.0" height="2.2" fill="#0000FF" rx="1.0" ry="1.0"/>
<rect x="199.8" y="473.7" width="9.0" height="2.2" fill="#0000FF" rx="1.0" ry="1.0"/>
<rect x="227.0" y="473.7" width="9.0" height="2.2" fill="#0000FF" rx="1.0" ry="1.0"/>
<rect x="264.0" y="473.7" width="9.0" height="2.2" fill="#0000FF" rx="1.0" ry="1.0"/>
<rect x="291.2" y="473.7" width="9.0" height="2.2" fill="#0000FF" rx="1.0" ry="1.0"/>
<rect x="320.5" y="473.7" width="9.0" height="2.2" fill="#0000FF" rx="1.0" ry="1.0"/>
<rect x="349.8" y="473.7" width="9.0" height="2.2" fill="#0000FF" rx="1.0" ry="1.0"/>
<rect x="377.0" y="473.7" width="9.0" height="2.2" fill="#0000FF" rx="1.0" ry="1.0"/>
<rect x="413.5" y="473.7" width="9.0" height="2.2" fill="#0000FF" rx="1.0" ry="1.0"/>
<rect x="440.5" y="473.7" width="9.0" height="2.2" fill="#0000FF" rx="1.0" ry="1.0"/>
<path d="M10,472.3 L30,473.8 L30,475.8 L12,477.8 Q8,474.8 10,472.3Z" fill="#0000FF"/>
<path d="M490,472.3 L470,473.8 L470,475.8 L488,477.8 Q492,474.8 490,472.3Z" fill="#0000FF"/>
<rect x="16.0" y="31.5" width="468.0" height="17.9" fill="#00FFFF" rx="8.9" ry="8.9"/>
<rect x="16.0" y="62.4" width="468.0" height="15.4" fill="#00FFFF" rx="7.7" ry="7.7"/>
<rect x="16.0" y="93.7" width="468.0" height="13.9" fill="#00FFFF" rx="6.9" ry="6.9"/>
<rect x="16.0" y="123.6" width="468.0" height="15.4" fill="#00FFFF" rx="7.7" ry="7.7"/>
<rect x="16.0" y="151.9" width="468.0" height="17.1" fill="#00FFFF" rx="8.5" ry="8.5"/>
<rect x="16.0" y="181.6" width="468.0" height="17.1" fill="#00FFFF" rx="8.5" ry="8.5"/>
<rect x="16.0" y="211.7" width="468.0" height="15.4" fill="#00FFFF" rx="7.7" ry="7.7"/>
<rect x="16.0" y="243.0" width="468.0" height="13.9" fill="#00FFFF" rx="6.9" ry="6.9"/>
<rect x="16.0" y="272.9" width="468.0" height="15.4" fill="#00FFFF" rx="7.7" ry="7.7"/>
<rect x="16.0" y="301.2" width="468.0" height="17.1" fill="#00FFFF" rx="8.5" ry="8.5"/>
<rect x="16.0" y="330.9" width="468.0" height="17.1" fill="#00FFFF" rx="8.5" ry="8.5"/>
<rect x="16.0" y="361.0" width="468.0" height="15.4" fill="#00FFFF" rx="7.7" ry="7.7"/>
<rect x="16.0" y="392.3" width="468.0" height="13.9" fill="#00FFFF" rx="6.9" ry="6.9"/>
<rect x="16.0" y="422.2" width="468.0" height="15.4" fill="#00FFFF" rx="7.7" ry="7.7"/>
<rect x="16.0" y="450.5" width="468.0" height="17.9" fill="#00FFFF" rx="8.9" ry="8.9"/>
<ellipse cx="40.0" cy="49.4" rx="7" ry="1.9" fill="#00B2FF"/>
<ellipse cx="40.0" cy="62.4" rx="7" ry="1.9" fill="#00B2FF"/>
<ellipse cx="69.5" cy="49.4" rx="7" ry="1.9" fill="#00B2FF"/>
<ellipse cx="69.5" cy="62.4" rx="7" ry="1.9" fill="#00B2FF"/>
<ellipse cx="130.8" cy="49.4" rx="7" ry="1.9" fill="#00B2FF"/>
<ellipse cx="130.8" cy="62.4" rx="7" ry="1.9" fill="#00B2FF"/>
<ellipse cx="160.5" cy="49.4" rx="7" ry="1.9" fill="#00B2FF"/>
<ellipse cx="160.5" cy="62.4" rx="7" ry="1.9" fill="#00B2FF"/>
<ellipse cx="189.5" cy="49.4" rx="7" ry="1.9" fill="#00B2FF"/>
<ellipse cx="189.5" cy="62.4" rx="7" ry="1.9" fill="#00B2FF"/>
<ellipse cx="219.2" cy="49.4" rx="7" ry="1.9" fill="#00B2FF"/>
<ellipse cx="219.2" cy="62.4" rx="7" ry="1.9" fill="#00B2FF"/>
<ellipse cx="280.8" cy="49.4" rx="7" ry="1.9" fill="#00B2FF"/>
<ellipse cx="280.8" cy="62.4" rx="7" ry="1.9" fill="#00B2FF"/>
<ellipse cx="310.5" cy="49.4" rx="7" ry="1.9" fill="#00B2FF"/>
<ellipse cx="310.5" cy="62.4" rx="7" ry="1.9" fill="#00B2FF"/>
<ellipse cx="339.5" cy="49.4" rx="7" ry="1.9" fill="#00B2FF"/>
<ellipse cx="339.5" cy="62.4" rx="7" ry="1.9" fill="#00B2FF"/>
<ellipse cx="369.2" cy="49.4" rx="7" ry="1.9" fill="#00B2FF"/>
<ellipse cx="369.2" cy="62.4" rx="7" ry="1.9" fill="#00B2FF"/>
<ellipse cx="430.5" cy="49.4" rx="7" ry="1.9" fill="#00B2FF"/>
<ellipse cx="430.5" cy="62.4" rx="7" ry="1.9" fill="#00B2FF"/>
<ellipse cx="460.0" cy="49.4" rx="7" ry="1.9" fill="#00B2FF"/>
<ellipse cx="460.0" cy="62.4" rx="7" ry="1.9" fill="#00B2FF"/>
<ellipse cx="40.0" cy="77.7" rx="7" ry="1.9" fill="#00B2FF"/>
<ellipse cx="40.0" cy="93.7" rx="7" ry="1.9" fill="#00B2FF"/>
<ellipse cx="69.5" cy="77.7" rx="7" ry="1.9" fill="#00B2FF"/>
<ellipse cx="69.5" cy="93.7" rx="7" ry="1.9" fill="#00B2FF"/>
<ellipse cx="130.8" cy="77.7" rx="7" ry="1.9" fill="#00B2FF"/>
<ellipse cx="130.8" cy="93.7" rx="7" ry="1.9" fill="#00B2FF"/>
<ellipse cx="160.5" cy="77.7" rx="7" ry="1.9" fill="#00B2FF"/>
<ellipse cx="160.5" cy="93.7" rx="7" ry="1.9" fill="#00B2FF"/>
<ellipse cx="189.5" cy="77.7" rx="7" ry="1.9" fill="#00B2FF"/>
<ellipse cx="189.5" cy="93.7" rx="7" ry="1.9" fill="#00B2FF"/>
<ellipse cx="219.2" cy="77.7" rx="7" ry="1.9" fill="#00B2FF"/>
<ellipse cx="219.2" cy="93.7" rx="7" ry="1.9" fill="#00B2FF"/>
<ellipse cx="280.8" cy="77.7" rx="7" ry="1.9" fill="#00B2FF"/>
<ellipse cx="280.8" cy="93.7" rx="7" ry="1.9" fill="#00B2FF"/>
<ellipse cx="310.5" cy="77.7" rx="7" ry="1.9" fill="#00B2FF"/>
<ellipse cx="310.5" cy="93.7" rx="7" ry="1.9" fill="#00B2FF"/>
<ellipse cx="339.5" cy="77.7" rx="7" ry="1.9" fill="#00B2FF"/>
<ellipse cx="339.5" cy="93.7" rx="7" ry="1.9" fill="#00B2FF"/>
<ellipse cx="369.2" cy="77.7" rx="7" ry="1.9" fill="#00B2FF"/>
<ellipse cx="369.2" cy="93.7" rx="7" ry="1.9" fill="#00B2FF"/>
<ellipse cx="430.5" cy="77.7" rx="7" ry="1.9" fill="#00B2FF"/>
<ellipse cx="430.5" cy="93.7" rx="7" ry="1.9" fill="#00B2FF"/>
<ellipse cx="460.0" cy="77.7" rx="7" ry="1.9" fill="#00B2FF"/>
<ellipse cx="460.0" cy="93.7" rx="7" ry="1.9" fill="#00B2FF"/>
<ellipse cx="40.0" cy="107.6" rx="7" ry="1.9" fill="#00B2FF"/>
<ellipse cx="40.0" cy="123.6" rx="7" ry="1.9" fill="#00B2FF"/>
<ellipse cx="69.5" cy="107.6" rx="7" ry="1.9" fill="#00B2FF"/>
<ellipse cx="69.5" cy="123.6" rx="7" ry="1.9" fill="#00B2FF"/>
<ellipse cx="130.8" cy="107.6" rx="7" ry="1.9" fill="#00B2FF"/>
<ellipse cx="130.8" cy="123.6" rx="7" ry="1.9" fill="#00B2FF"/>
<ellipse cx="160.5" cy="107.6" rx="7" ry="1.9" fill="#00B2FF"/>
<ellipse cx="160.5" cy="123.6" rx="7" ry="1.9" fill="#00B2FF"/>
<ellipse cx="189.5" cy="107.6" rx="7" ry="1.9" fill="#00B2FF"/>
<ellipse cx="189.5" cy="123.6" rx="7" ry="1.9" fill="#00B2FF"/>
<ellipse cx="219.2" cy="107.6" rx="7" ry="1.9" fill="#00B2FF"/>
<ellipse cx="219.2" cy="123.6" rx="7" ry="1.9" fill="#00B2FF"/>
<ellipse cx="280.8" cy="107.6" rx="7" ry="1.9" fill="#00B2FF"/>
<ellipse cx="280.8" cy="123.6" rx="7" ry="1.9" fill="#00B2FF"/>
<ellipse cx="310.5" cy="107.6" rx="7" ry="1.9" fill="#00B2FF"/>
<ellipse cx="310.5" cy="123.6" rx="7" ry="1.9" fill="#00B2FF"/>
<ellipse cx="339.5" cy="107.6" rx="7" ry="1.9" fill="#00B2FF"/>
<ellipse cx="339.5" cy="123.6" rx="7" ry="1.9" fill="#00B2FF"/>
<ellipse cx="369.2" cy="107.6" rx="7" ry="1.9" fill="#00B2FF"/>
<ellipse cx="369.2" cy="123.6" rx="7" ry="1.9" fill="#00B2FF"/>
<ellipse cx="430.5" cy="107.6" rx="7" ry="1.9" fill="#00B2FF"/>
<ellipse cx="430.5" cy="123.6" rx="7" ry="1.9" fill="#00B2FF"/>
<ellipse cx="460.0" cy="107.6" rx="7" ry="1.9" fill="#00B2FF"/>
<ellipse cx="460.0" cy="123.6" rx="7" ry="1.9" fill="#00B2FF"/>
<ellipse cx="40.0" cy="138.9" rx="7" ry="1.9" fill="#00B2FF"/>
<ellipse cx="40.0" cy="151.9" rx="7" ry="1.9" fill="#00B2FF"/>
<ellipse cx="69.5" cy="138.9" rx="7" ry="1.9" fill="#00B2FF"/>
<ellipse cx="69.5" cy="151.9" rx="7" ry="1.9" fill="#00B2FF"/>
<ellipse cx="130.8" cy="138.9" rx="7" ry="1.9" fill="#00B2FF"/>
<ellipse cx="130.8" cy="151.9" rx="7" ry="1.9" fill="#00B2FF"/>
<ellipse cx="160.5" cy="138.9" rx="7" ry="1.9" fill="#00B2FF"/>
<ellipse cx="160.5" cy="151.9" rx="7" ry="1.9" fill="#00B2FF"/>
<ellipse cx="189.5" cy="138.9" rx="7" ry="1.9" fill="#00B2FF"/>
<ellipse cx="189.5" cy="151.9" rx="7" ry="1.9" fill="#00B2FF"/>
<ellipse cx="219.2" cy="138.9" rx="7" ry="1.9" fill="#00B2FF"/>
<ellipse cx="219.2" cy="151.9" rx="7" ry="1.9" fill="#00B2FF"/>
<ellipse cx="280.8" cy="138.9" rx="7" ry="1.9" fill="#00B2FF"/>
<ellipse cx="280.8" cy="151.9" rx="7" ry="1.9" fill="#00B2FF"/>
<ellipse cx="310.5" cy="138.9" rx="7" ry="1.9" fill="#00B2FF"/>
<ellipse cx="310.5" cy="151.9" rx="7" ry="1.9" fill="#00B2FF"/>
<ellipse cx="339.5" cy="138.9" rx="7" ry="1.9" fill="#00B2FF"/>
<ellipse cx="339.5" cy="151.9" rx="7" ry="1.9" fill="#00B2FF"/>
<ellipse cx="369.2" cy="138.9" rx="7" ry="1.9" fill="#00B2FF"/>
<ellipse cx="369.2" cy="151.9" rx="7" ry="1.9" fill="#00B2FF"/>
<ellipse cx="430.5" cy="138.9" rx="7" ry="1.9" fill="#00B2FF"/>
<ellipse cx="430.5" cy="151.9" rx="7" ry="1.9" fill="#00B2FF"/>
<ellipse cx="460.0" cy="138.9" rx="7" ry="1.9" fill="#00B2FF"/>
<ellipse cx="460.0" cy="151.9" rx="7" ry="1.9" fill="#00B2FF"/>
<ellipse cx="40.0" cy="169.0" rx="7" ry="1.9" fill="#00B2FF"/>
<ellipse cx="40.0" cy="181.6" rx="7" ry="1.9" fill="#00B2FF"/>
<ellipse cx="69.5" cy="169.0" rx="7" ry="1.9" fill="#00B2FF"/>
<ellipse cx="69.5" cy="181.6" rx="7" ry="1.9" fill="#00B2FF"/>
<ellipse cx="130.8" cy="169.0" rx="7" ry="1.9" fill="#00B2FF"/>
<ellipse cx="130.8" cy="181.6" rx="7" ry="1.9" fill="#00B2FF"/>
<ellipse cx="160.5" cy="169.0" rx="7" ry="1.9" fill="#00B2FF"/>
<ellipse cx="160.5" cy="181.6" rx="7" ry="1.9" fill="#00B2FF"/>
<ellipse cx="189.5" cy="169.0" rx="7" ry="1.9" fill="#00B2FF"/>
<ellipse cx="189.5" cy="181.6" rx="7" ry="1.9" fill="#00B2FF"/>
<ellipse cx="219.2" cy="169.0" rx="7" ry="1.9" fill="#00B2FF"/>
<ellipse cx="219.2" cy="181.6" rx="7" ry="1.9" fill="#00B2FF"/>
<ellipse cx="280.8" cy="169.0" rx="7" ry="1.9" fill="#00B2FF"/>
<ellipse cx="280.8" cy="181.6" rx="7" ry="1.9" fill="#00B2FF"/>
<ellipse cx="310.5" cy="169.0" rx="7" ry="1.9" fill="#00B2FF"/>
<ellipse cx="310.5" cy="181.6" rx="7" ry="1.9" fill="#00B2FF"/>
<ellipse cx="339.5" cy="169.0" rx="7" ry="1.9" fill="#00B2FF"/>
<ellipse cx="339.5" cy="181.6" rx="7" ry="1.9" fill="#00B2FF"/>
<ellipse cx="369.2" cy="169.0" rx="7" ry="1.9" fill="#00B2FF"/>
<ellipse cx="369.2" cy="181.6" rx="7" ry="1.9" fill="#00B2FF"/>
<ellipse cx="430.5" cy="169.0" rx="7" ry="1.9" fill="#00B2FF"/>
<ellipse cx="430.5" cy="181.6" rx="7" ry="1.9" fill="#00B2FF"/>
<ellipse cx="460.0" cy="169.0" rx="7" ry="1.9" fill="#00B2FF"/>
<ellipse cx="460.0" cy="181.6" rx="7" ry="1.9" fill="#00B2FF"/>
<ellipse cx="40.0" cy="198.7" rx="7" ry="1.9" fill="#00B2FF"/>
<ellipse cx="40.0" cy="211.7" rx="7" ry="1.9" fill="#00B2FF"/>
<ellipse cx="69.5" cy="198.7" rx="7" ry="1.9" fill="#00B2FF"/>
<ellipse cx="69.5" cy="211.7" rx="7" ry="1.9" fill="#00B2FF"/>
<ellipse cx="130.8" cy="198.7" rx="7" ry="1.9" fill="#00B2FF"/>
<ellipse cx="130.8" cy="211.7" rx="7" ry="1.9" fill="#00B2FF"/>
<ellipse cx="160.5" cy="198.7" rx="7" ry="1.9" fill="#00B2FF"/>
<ellipse cx="160.5" cy="211.7" rx="7" ry="1.9" fill="#00B2FF"/>
<ellipse cx="189.5" cy="198.7" rx="7" ry="1.9" fill="#00B2FF"/>
<ellipse cx="189.5" cy="211.7" rx="7" ry="1.9" fill="#00B2FF"/>
<ellipse cx="219.2" cy="198.7" rx="7" ry="1.9" fill="#00B2FF"/>
<ellipse cx="219.2" cy="211.7" rx="7" ry="1.9" fill="#00B2FF"/>
<ellipse cx="280.8" cy="198.7" rx="7" ry="1.9" fill="#00B2FF"/>
<ellipse cx="280.8" cy="211.7" rx="7" ry="1.9" fill="#00B2FF"/>
<ellipse cx="310.5" cy="198.7" rx="7" ry="1.9" fill="#00B2FF"/>
<ellipse cx="310.5" cy="211.7" rx="7" ry="1.9" fill="#00B2FF"/>
<ellipse cx="339.5" cy="198.7" rx="7" ry="1.9" fill="#00B2FF"/>
<ellipse cx="339.5" cy="211.7" rx="7" ry="1.9" fill="#00B2FF"/>
<ellipse cx="369.2" cy="198.7" rx="7" ry="1.9" fill="#00B2FF"/>
<ellipse cx="369.2" cy="211.7" rx="7" ry="1.9" fill="#00B2FF"/>
<ellipse cx="430.5" cy="198.7" rx="7" ry="1.9" fill="#00B2FF"/>
<ellipse cx="430.5" cy="211.7" rx="7" ry="1.9" fill="#00B2FF"/>
<ellipse cx="460.0" cy="198.7" rx="7" ry="1.9" fill="#00B2FF"/>
<ellipse cx="460.0" cy="211.7" rx="7" ry="1.9" fill="#00B2FF"/>
<ellipse cx="40.0" cy="227.0" rx="7" ry="1.9" fill="#00B2FF"/>
<ellipse cx="40.0" cy="243.0" rx="7" ry="1.9" fill="#00B2FF"/>
<ellipse cx="69.5" cy="227.0" rx="7" ry="1.9" fill="#00B2FF"/>
<ellipse cx="69.5" cy="243.0" rx="7" ry="1.9" fill="#00B2FF"/>
<ellipse cx="130.8" cy="227.0" rx="7" ry="1.9" fill="#00B2FF"/>
<ellipse cx="130.8" cy="243.0" rx="7" ry="1.9" fill="#00B2FF"/>
<ellipse cx="160.5" cy="227.0" rx="7" ry="1.9" fill="#00B2FF"/>
<ellipse cx="160.5" cy="243.0" rx="7" ry="1.9" fill="#00B2FF"/>
<ellipse cx="189.5" cy="227.0" rx="7" ry="1.9" fill="#00B2FF"/>
<ellipse cx="189.5" cy="243.0" rx="7" ry="1.9" fill="#00B2FF"/>
<ellipse cx="219.2" cy="227.0" rx="7" ry="1.9" fill="#00B2FF"/>
<ellipse cx="219.2" cy="243.0" rx="7" ry="1.9" fill="#00B2FF"/>
<ellipse cx="280.8" cy="227.0" rx="7" ry="1.9" fill="#00B2FF"/>
<ellipse cx="280.8" cy="243.0" rx="7" ry="1.9" fill="#00B2FF"/>
<ellipse cx="310.5" cy="227.0" rx="7" ry="1.9" fill="#00B2FF"/>
<ellipse cx="310.5" cy="243.0" rx="7" ry="1.9" fill="#00B2FF"/>
<ellipse cx="339.5" cy="227.0" rx="7" ry="1.9" fill="#00B2FF"/>
<ellipse cx="339.5" cy="243.0" rx="7" ry="1.9" fill="#00B2FF"/>
<ellipse cx="369.2" cy="227.0" rx="7" ry="1.9" fill="#00B2FF"/>
<ellipse cx="369.2" cy="243.0" rx="7" ry="1.9" fill="#00B2FF"/>
<ellipse cx="430.5" cy="227.0" rx="7" ry="1.9" fill="#00B2FF"/>
<ellipse cx="430.5" cy="243.0" rx="7" ry="1.9" fill="#00B2FF"/>
<ellipse cx="460.0" cy="227.0" rx="7" ry="1.9" fill="#00B2FF"/>
<ellipse cx="460.0" cy="243.0" rx="7" ry="1.9" fill="#00B2FF"/>
<ellipse cx="40.0" cy="256.9" rx="7" ry="1.9" fill="#00B2FF"/>
<ellipse cx="40.0" cy="272.9" rx="7" ry="1.9" fill="#00B2FF"/>
<ellipse cx="69.5" cy="256.9" rx="7" ry="1.9" fill="#00B2FF"/>
<ellipse cx="69.5" cy="272.9" rx="7" ry="1.9" fill="#00B2FF"/>
<ellipse cx="130.8" cy="256.9" rx="7" ry="1.9" fill="#00B2FF"/>
<ellipse cx="130.8" cy="272.9" rx="7" ry="1.9" fill="#00B2FF"/>
<ellipse cx="160.5" cy="256.9" rx="7" ry="1.9" fill="#00B2FF"/>
<ellipse cx="160.5" cy="272.9" rx="7" ry="1.9" fill="#00B2FF"/>
<ellipse cx="189.5" cy="256.9" rx="7" ry="1.9" fill="#00B2FF"/>
<ellipse cx="189.5" cy="272.9" rx="7" ry="1.9" fill="#00B2FF"/>
<ellipse cx="219.2" cy="256.9" rx="7" ry="1.9" fill="#00B2FF"/>
<ellipse cx="219.2" cy="272.9" rx="7" ry="1.9" fill="#00B2FF"/>
<ellipse cx="280.8" cy="256.9" rx="7" ry="1.9" fill="#00B2FF"/>
<ellipse cx="280.8" cy="272.9" rx="7" ry="1.9" fill="#00B2FF"/>
<ellipse cx="310.5" cy="256.9" rx="7" ry="1.9" fill="#00B2FF"/>
<ellipse cx="310.5" cy="272.9" rx="7" ry="1.9" fill="#00B2FF"/>
<ellipse cx="339.5" cy="256.9" rx="7" ry="1.9" fill="#00B2FF"/>
<ellipse cx="339.5" cy="272.9" rx="7" ry="1.9" fill="#00B2FF"/>
<ellipse cx="369.2" cy="256.9" rx="7" ry="1.9" fill="#00B2FF"/>
<ellipse cx="369.2" cy="272.9" rx="7" ry="1.9" fill="#00B2FF"/>
<ellipse cx="430.5" cy="256.9" rx="7" ry="1.9" fill="#00B2FF"/>
<ellipse cx="430.5" cy="272.9" rx="7" ry="1.9" fill="#00B2FF"/>
<ellipse cx="460.0" cy="256.9" rx="7" ry="1.9" fill="#00B2FF"/>
<ellipse cx="460.0" cy="272.9" rx="7" ry="1.9" fill="#00B2FF"/>
<ellipse cx="40.0" cy="288.2" rx="7" ry="1.9" fill="#00B2FF"/>
<ellipse cx="40.0" cy="301.2" rx="7" ry="1.9" fill="#00B2FF"/>
<ellipse cx="69.5" cy="288.2" rx="7" ry="1.9" fill="#00B2FF"/>
<ellipse cx="69.5" cy="301.2" rx="7" ry="1.9" fill="#00B2FF"/>
<ellipse cx="130.8" cy="288.2" rx="7" ry="1.9" fill="#00B2FF"/>
<ellipse cx="130.8" cy="301.2" rx="7" ry="1.9" fill="#00B2FF"/>
<ellipse cx="160.5" cy="288.2" rx="7" ry="1.9" fill="#00B2FF"/>
<ellipse cx="160.5" cy="301.2" rx="7" ry="1.9" fill="#00B2FF"/>
<ellipse cx="189.5" cy="288.2" rx="7" ry="1.9" fill="#00B2FF"/>
<ellipse cx="189.5" cy="301.2" rx="7" ry="1.9" fill="#00B2FF"/>
<ellipse cx="219.2" cy="288.2" rx="7" ry="1.9" fill="#00B2FF"/>
<ellipse cx="219.2" cy="301.2" rx="7" ry="1.9" fill="#00B2FF"/>
<ellipse cx="280.8" cy="288.2" rx="7" ry="1.9" fill="#00B2FF"/>
<ellipse cx="280.8" cy="301.2" rx="7" ry="1.9" fill="#00B2FF"/>
<ellipse cx="310.5" cy="288.2" rx="7" ry="1.9" fill="#00B2FF"/>
<ellipse cx="310.5" cy="301.2" rx="7" ry="1.9" fill="#00B2FF"/>
<ellipse cx="339.5" cy="288.2" rx="7" ry="1.9" fill="#00B2FF"/>
<ellipse cx="339.5" cy="301.2" rx="7" ry="1.9" fill="#00B2FF"/>
<ellipse cx="369.2" cy="288.2" rx="7" ry="1.9" fill="#00B2FF"/>
<ellipse cx="369.2" cy="301.2" rx="7" ry="1.9" fill="#00B2FF"/>
<ellipse cx="430.5" cy="288.2" rx="7" ry="1.9" fill="#00B2FF"/>
<ellipse cx="430.5" cy="301.2" rx="7" ry="1.9" fill="#00B2FF"/>
<ellipse cx="460.0" cy="288.2" rx="7" ry="1.9" fill="#00B2FF"/>
<ellipse cx="460.0" cy="301.2" rx="7" ry="1.9" fill="#00B2FF"/>
<ellipse cx="40.0" cy="318.3" rx="7" ry="1.9" fill="#00B2FF"/>
<ellipse cx="40.0" cy="330.9" rx="7" ry="1.9" fill="#00B2FF"/>
<ellipse cx="69.5" cy="318.3" rx="7" ry="1.9" fill="#00B2FF"/>
<ellipse cx="69.5" cy="330.9" rx="7" ry="1.9" fill="#00B2FF"/>
<ellipse cx="130.8" cy="318.3" rx="7" ry="1.9" fill="#00B2FF"/>
<ellipse cx="130.8" cy="330.9" rx="7" ry="1.9" fill="#00B2FF"/>
<ellipse cx="160.5" cy="318.3" rx="7" ry="1.9" fill="#00B2FF"/>
<ellipse cx="160.5" cy="330.9" rx="7" ry="1.9" fill="#00B2FF"/>
<ellipse cx="189.5" cy="318.3" rx="7" ry="1.9" fill="#00B2FF"/>
<ellipse cx="189.5" cy="330.9" rx="7" ry="1.9" fill="#00B2FF"/>
<ellipse cx="219.2" cy="318.3" rx="7" ry="1.9" fill="#00B2FF"/>
<ellipse cx="219.2" cy="330.9" rx="7" ry="1.9" fill="#00B2FF"/>
<ellipse cx="280.8" cy="318.3" rx="7" ry="1.9" fill="#00B2FF"/>
<ellipse cx="280.8" cy="330.9" rx="7" ry="1.9" fill="#00B2FF"/>
<ellipse cx="310.5" cy="318.3" rx="7" ry="1.9" fill="#00B2FF"/>
<ellipse cx="310.5" cy="330.9" rx="7" ry="1.9" fill="#00B2FF"/>
<ellipse cx="339.5" cy="318.3" rx="7" ry="1.9" fill="#00B2FF"/>
<ellipse cx="339.5" cy="330.9" rx="7" ry="1.9" fill="#00B2FF"/>
<ellipse cx="369.2" cy="318.3" rx="7" ry="1.9" fill="#00B2FF"/>
<ellipse cx="369.2" cy="330.9" rx="7" ry="1.9" fill="#00B2FF"/>
<ellipse cx="430.5" cy="318.3" rx="7" ry="1.9" fill="#00B2FF"/>
<ellipse cx="430.5" cy="330.9" rx="7" ry="1.9" fill="#00B2FF"/>
<ellipse cx="460.0" cy="318.3" rx="7" ry="1.9" fill="#00B2FF"/>
<ellipse cx="460.0" cy="330.9" rx="7" ry="1.9" fill="#00B2FF"/>
<ellipse cx="40.0" cy="348.0" rx="7" ry="1.9" fill="#00B2FF"/>
<ellipse cx="40.0" cy="361.0" rx="7" ry="1.9" fill="#00B2FF"/>
<ellipse cx="69.5" cy="348.0" rx="7" ry="1.9" fill="#00B2FF"/>
<ellipse cx="69.5" cy="361.0" rx="7" ry="1.9" fill="#00B2FF"/>
<ellipse cx="130.8" cy="348.0" rx="7" ry="1.9" fill="#00B2FF"/>
<ellipse cx="130.8" cy="361.0" rx="7" ry="1.9" fill="#00B2FF"/>
<ellipse cx="160.5" cy="348.0" rx="7" ry="1.9" fill="#00B2FF"/>
<ellipse cx="160.5" cy="361.0" rx="7" ry="1.9" fill="#00B2FF"/>
<ellipse cx="189.5" cy="348.0" rx="7" ry="1.9" fill="#00B2FF"/>
<ellipse cx="189.5" cy="361.0" rx="7" ry="1.9" fill="#00B2FF"/>
<ellipse cx="219.2" cy="348.0" rx="7" ry="1.9" fill="#00B2FF"/>
<ellipse cx="219.2" cy="361.0" rx="7" ry="1.9" fill="#00B2FF"/>
<ellipse cx="280.8" cy="348.0" rx="7" ry="1.9" fill="#00B2FF"/>
<ellipse cx="280.8" cy="361.0" rx="7" ry="1.9" fill="#00B2FF"/>
<ellipse cx="310.5" cy="348.0" rx="7" ry="1.9" fill="#00B2FF"/>
<ellipse cx="310.5" cy="361.0" rx="7" ry="1.9" fill="#00B2FF"/>
<ellipse cx="339.5" cy="348.0" rx="7" ry="1.9" fill="#00B2FF"/>
<ellipse cx="339.5" cy="361.0" rx="7" ry="1.9" fill="#00B2FF"/>
<ellipse cx="369.2" cy="348.0" rx="7" ry="1.9" fill="#00B2FF"/>
<ellipse cx="369.2" cy="361.0" rx="7" ry="1.9" fill="#00B2FF"/>
<ellipse cx="430.5" cy="348.0" rx="7" ry="1.9" fill="#00B2FF"/>
<ellipse cx="430.5" cy="361.0" rx="7" ry="1.9" fill="#00B2FF"/>
<ellipse cx="460.0" cy="348.0" rx="7" ry="1.9" fill="#00B2FF"/>
<ellipse cx="460.0" cy="361.0" rx="7" ry="1.9" fill="#00B2FF"/>
<ellipse cx="40.0" cy="376.3" rx="7" ry="1.9" fill="#00B2FF"/>
<ellipse cx="40.0" cy="392.3" rx="7" ry="1.9" fill="#00B2FF"/>
<ellipse cx="69.5" cy="376.3" rx="7" ry="1.9" fill="#00B2FF"/>
<ellipse cx="69.5" cy="392.3" rx="7" ry="1.9" fill="#00B2FF"/>
<ellipse cx="130.8" cy="376.3" rx="7" ry="1.9" fill="#00B2FF"/>
<ellipse cx="130.8" cy="392.3" rx="7" ry="1.9" fill="#00B2FF"/>
<ellipse cx="160.5" cy="376.3" rx="7" ry="1.9" fill="#00B2FF"/>
<ellipse cx="160.5" cy="392.3" rx="7" ry="1.9" fill="#00B2FF"/>
<ellipse cx="189.5" cy="376.3" rx="7" ry="1.9" fill="#00B2FF"/>
<ellipse cx="189.5" cy="392.3" rx="7" ry="1.9" fill="#00B2FF"/>
<ellipse cx="219.2" cy="376.3" rx="7" ry="1.9" fill="#00B2FF"/>
<ellipse cx="219.2" cy="392.3" rx="7" ry="1.9" fill="#00B2FF"/>
<ellipse cx="280.8" cy="376.3" rx="7" ry="1.9" fill="#00B2FF"/>
<ellipse cx="280.8" cy="392.3" rx="7" ry="1.9" fill="#00B2FF"/>
<ellipse cx="310.5" cy="376.3" rx="7" ry="1.9" fill="#00B2FF"/>
<ellipse cx="310.5" cy="392.3" rx="7" ry="1.9" fill="#00B2FF"/>
<ellipse cx="339.5" cy="376.3" rx="7" ry="1.9" fill="#00B2FF"/>
<ellipse cx="339.5" cy="392.3" rx="7" ry="1.9" fill="#00B2FF"/>
<ellipse cx="369.2" cy="376.3" rx="7" ry="1.9" fill="#00B2FF"/>
<ellipse cx="369.2" cy="392.3" rx="7" ry="1.9" fill="#00B2FF"/>
<ellipse cx="430.5" cy="376.3" rx="7" ry="1.9" fill="#00B2FF"/>
<ellipse cx="430.5" cy="392.3" rx="7" ry="1.9" fill="#00B2FF"/>
<ellipse cx="460.0" cy="376.3" rx="7" ry="1.9" fill="#00B2FF"/>
<ellipse cx="460.0" cy="392.3" rx="7" ry="1.9" fill="#00B2FF"/>
<ellipse cx="40.0" cy="406.2" rx="7" ry="1.9" fill="#00B2FF"/>
<ellipse cx="40.0" cy="422.2" rx="7" ry="1.9" fill="#00B2FF"/>
<ellipse cx="69.5" cy="406.2" rx="7" ry="1.9" fill="#00B2FF"/>
<ellipse cx="69.5" cy="422.2" rx="7" ry="1.9" fill="#00B2FF"/>
<ellipse cx="130.8" cy="406.2" rx="7" ry="1.9" fill="#00B2FF"/>
<ellipse cx="130.8" cy="422.2" rx="7" ry="1.9" fill="#00B2FF"/>
<ellipse cx="160.5" cy="406.2" rx="7" ry="1.9" fill="#00B2FF"/>
<ellipse cx="160.5" cy="422.2" rx="7" ry="1.9" fill="#00B2FF"/>
<ellipse cx="189.5" cy="406.2" rx="7" ry="1.9" fill="#00B2FF"/>
<ellipse cx="189.5" cy="422.2" rx="7" ry="1.9" fill="#00B2FF"/>
<ellipse cx="219.2" cy="406.2" rx="7" ry="1.9" fill="#00B2FF"/>
<ellipse cx="219.2" cy="422.2" rx="7" ry="1.9" fill="#00B2FF"/>
<ellipse cx="280.8" cy="406.2" rx="7" ry="1.9" fill="#00B2FF"/>
<ellipse cx="280.8" cy="422.2" rx="7" ry="1.9" fill="#00B2FF"/>
<ellipse cx="310.5" cy="406.2" rx="7" ry="1.9" fill="#00B2FF"/>
<ellipse cx="310.5" cy="422.2" rx="7" ry="1.9" fill="#00B2FF"/>
<ellipse cx="339.5" cy="406.2" rx="7" ry="1.9" fill="#00B2FF"/>
<ellipse cx="339.5" cy="422.2" rx="7" ry="1.9" fill="#00B2FF"/>
<ellipse cx="369.2" cy="406.2" rx="7" ry="1.9" fill="#00B2FF"/>
<ellipse cx="369.2" cy="422.2" rx="7" ry="1.9" fill="#00B2FF"/>
<ellipse cx="430.5" cy="406.2" rx="7" ry="1.9" fill="#00B2FF"/>
<ellipse cx="430.5" cy="422.2" rx="7" ry="1.9" fill="#00B2FF"/>
<ellipse cx="460.0" cy="406.2" rx="7" ry="1.9" fill="#00B2FF"/>
<ellipse cx="460.0" cy="422.2" rx="7" ry="1.9" fill="#00B2FF"/>
<ellipse cx="40.0" cy="437.5" rx="7" ry="1.9" fill="#00B2FF"/>
<ellipse cx="40.0" cy="450.5" rx="7" ry="1.9" fill="#00B2FF"/>
<ellipse cx="69.5" cy="437.5" rx="7" ry="1.9" fill="#00B2FF"/>
<ellipse cx="69.5" cy="450.5" rx="7" ry="1.9" fill="#00B2FF"/>
<ellipse cx="130.8" cy="437.5" rx="7" ry="1.9" fill="#00B2FF"/>
<ellipse cx="130.8" cy="450.5" rx="7" ry="1.9" fill="#00B2FF"/>
<ellipse cx="160.5" cy="437.5" rx="7" ry="1.9" fill="#00B2FF"/>
<ellipse cx="160.5" cy="450.5" rx="7" ry="1.9" fill="#00B2FF"/>
<ellipse cx="189.5" cy="437.5" rx="7" ry="1.9" fill="#00B2FF"/>
<ellipse cx="189.5" cy="450.5" rx="7" ry="1.9" fill="#00B2FF"/>
<ellipse cx="219.2" cy="437.5" rx="7" ry="1.9" fill="#00B2FF"/>
<ellipse cx="219.2" cy="450.5" rx="7" ry="1.9" fill="#00B2FF"/>
<ellipse cx="280.8" cy="437.5" rx="7" ry="1.9" fill="#00B2FF"/>
<ellipse cx="280.8" cy="450.5" rx="7" ry="1.9" fill="#00B2FF"/>
<ellipse cx="310.5" cy="437.5" rx="7" ry="1.9" fill="#00B2FF"/>
<ellipse cx="310.5" cy="450.5" rx="7" ry="1.9" fill="#00B2FF"/>
<ellipse cx="339.5" cy="437.5" rx="7" ry="1.9" fill="#00B2FF"/>
<ellipse cx="339.5" cy="450.5" rx="7" ry="1.9" fill="#00B2FF"/>
<ellipse cx="369.2" cy="437.5" rx="7" ry="1.9" fill="#00B2FF"/>
<ellipse cx="369.2" cy="450.5" rx="7" ry="1.9" fill="#00B2FF"/>
<ellipse cx="430.5" cy="437.5" rx="7" ry="1.9" fill="#00B2FF"/>
<ellipse cx="430.5" cy="450.5" rx="7" ry="1.9" fill="#00B2FF"/>
<ellipse cx="460.0" cy="437.5" rx="7" ry="1.9" fill="#00B2FF"/>
<ellipse cx="460.0" cy="450.5" rx="7" ry="1.9" fill="#00B2FF"/>
<rect x="94.5" y="34.5" width="11.0" height="430.9" fill="#00FFFF"/>
<rect x="244.5" y="34.5" width="11.0" height="430.9" fill="#00FFFF"/>
<rect x="394.5" y="34.5" width="11.0" height="430.9" fill="#00FFFF"/>
<path d="M100,150.3 L107.5,175.3 L100,200.3 L92.5,175.3 Z" fill="#00B2FF"/>
<path d="M250,150.3 L257.5,175.3 L250,200.3 L242.5,175.3 Z" fill="#00B2FF"/>
<path d="M400,150.3 L407.5,175.3 L400,200.3 L392.5,175.3 Z" fill="#00B2FF"/>
<path d="M100,299.6 L107.5,324.6 L100,349.6 L92.5,324.6 Z" fill="#00B2FF"/>
<path d="M250,299.6 L257.5,324.6 L250,349.6 L242.5,324.6 Z" fill="#00B2FF"/>
<path d="M400,299.6 L407.5,324.6 L400,349.6 L392.5,324.6 Z" fill="#00B2FF"/>
<path d="M92,30 L108,30 L100,40Z" fill="#00B2FF"/>
<path d="M92,470 L108,470 L100,460Z" fill="#00B2FF"/>
<path d="M242,30 L258,30 L250,40Z" fill="#00B2FF"/>
<path d="M242,470 L258,470 L250,460Z" fill="#00B2FF"/>
<path d="M392,30 L408,30 L400,40Z" fill="#00B2FF"/>
<path d="M392,470 L408,470 L400,460Z" fill="#00B2FF"/>
<path d="M22.0,47.9 Q23.0,37.5 27.0,33.0 Q31.0,37.5 32.0,47.9Z" fill="#00FFB2"/>
<path d="M51.0,47.9 Q52.0,37.5 56.0,33.0 Q60.0,37.5 61.0,47.9Z" fill="#00FFB2"/>
<path d="M136.0,47.9 Q137.4,37.5 143.0,33.0 Q148.6,37.5 150.0,47.9Z" fill="#00FFB2"/>
<path d="M168.0,47.9 Q169.4,37.5 175.0,33.0 Q180.6,37.5 182.0,47.9Z" fill="#00FFB2"/>
<path d="M200.0,47.9 Q201.4,37.5 207.0,33.0 Q212.6,37.5 214.0,47.9Z" fill="#00FFB2"/>
<path d="M286.0,47.9 Q287.4,37.5 293.0,33.0 Q298.6,37.5 300.0,47.9Z" fill="#00FFB2"/>
<path d="M318.0,47.9 Q319.4,37.5 325.0,33.0 Q330.6,37.5 332.0,47.9Z" fill="#00FFB2"/>
<path d="M350.0,47.9 Q351.4,37.5 357.0,33.0 Q362.6,37.5 364.0,47.9Z" fill="#00FFB2"/>
<path d="M439.0,47.9 Q440.0,37.5 444.0,33.0 Q448.0,37.5 449.0,47.9Z" fill="#00FFB2"/>
<path d="M468.0,47.9 Q469.0,37.5 473.0,33.0 Q477.0,37.5 478.0,47.9Z" fill="#00FFB2"/>
<path d="M22.0,76.2 Q23.0,67.6 27.0,63.9 Q31.0,67.6 32.0,76.2Z" fill="#00FFB2"/>
<path d="M51.0,76.2 Q52.0,67.6 56.0,63.9 Q60.0,67.6 61.0,76.2Z" fill="#00FFB2"/>
<path d="M136.0,76.2 Q137.4,67.6 143.0,63.9 Q148.6,67.6 150.0,76.2Z" fill="#00FFB2"/>
<path d="M168.0,76.2 Q169.4,67.6 175.0,63.9 Q180.6,67.6 182.0,76.2Z" fill="#00FFB2"/>
<path d="M200.0,76.2 Q201.4,67.6 207.0,63.9 Q212.6,67.6 214.0,76.2Z" fill="#00FFB2"/>
<path d="M286.0,76.2 Q287.4,67.6 293.0,63.9 Q298.6,67.6 300.0,76.2Z" fill="#00FFB2"/>
<path d="M318.0,76.2 Q319.4,67.6 325.0,63.9 Q330.6,67.6 332.0,76.2Z" fill="#00FFB2"/>
<path d="M350.0,76.2 Q351.4,67.6 357.0,63.9 Q362.6,67.6 364.0,76.2Z" fill="#00FFB2"/>
<path d="M439.0,76.2 Q440.0,67.6 444.0,63.9 Q448.0,67.6 449.0,76.2Z" fill="#00FFB2"/>
<path d="M468.0,76.2 Q469.0,67.6 473.0,63.9 Q477.0,67.6 478.0,76.2Z" fill="#00FFB2"/>
<path d="M15,100.65 C15,94.15 23,95.15 29,95.65 L68,100.65 L29,105.65 C23,106.15 15,107.15 15,100.65Z" fill="#00FFB2"/>
<path d="M21,96.65 L34,100.65 L21,104.65Z" fill="#00FF00"/>
<path d="M130,100.65 Q175,89.65 242,100.65 Q175,111.65 130,100.65Z" fill="#00FFB2"/>
<path d="M168,100.65 L175,96.35000000000001 L182,100.65 L175,104.95Z" fill="#00FF00"/>
<path d="M260,100.65 Q325,89.65 390,100.65 Q325,111.65 260,100.65Z" fill="#00FFB2"/>
<path d="M318,100.65 L325,96.35000000000001 L332,100.65 L325,104.95Z" fill="#00FF00"/>
<path d="M485,100.65 C485,94.15 477,95.15 471,95.65 L412,100.65 L471,105.65 C477,106.15 485,107.15 485,100.65Z" fill="#00FFB2"/>
<path d="M479,96.65 L466,100.65 L479,104.65Z" fill="#00FF00"/>
<path d="M22.0,125.1 Q23.0,133.7 27.0,137.4 Q31.0,133.7 32.0,125.1Z" fill="#00FFB2"/>
<path d="M51.0,125.1 Q52.0,133.7 56.0,137.4 Q60.0,133.7 61.0,125.1Z" fill="#00FFB2"/>
<path d="M136.0,125.1 Q137.4,133.7 143.0,137.4 Q148.6,133.7 150.0,125.1Z" fill="#00FFB2"/>
<path d="M168.0,125.1 Q169.4,133.7 175.0,137.4 Q180.6,133.7 182.0,125.1Z" fill="#00FFB2"/>
<path d="M200.0,125.1 Q201.4,133.7 207.0,137.4 Q212.6,133.7 214.0,125.1Z" fill="#00FFB2"/>
<path d="M286.0,125.1 Q287.4,133.7 293.0,137.4 Q298.6,133.7 300.0,125.1Z" fill="#00FFB2"/>
<path d="M318.0,125.1 Q319.4,133.7 325.0,137.4 Q330.6,133.7 332.0,125.1Z" fill="#00FFB2"/>
<path d="M350.0,125.1 Q351.4,133.7 357.0,137.4 Q362.6,133.7 364.0,125.1Z" fill="#00FFB2"/>
<path d="M439.0,125.1 Q440.0,133.7 444.0,137.4 Q448.0,133.7 449.0,125.1Z" fill="#00FFB2"/>
<path d="M468.0,125.1 Q469.0,133.7 473.0,137.4 Q477.0,133.7 478.0,125.1Z" fill="#00FFB2"/>
<path d="M22.0,153.4 Q23.0,163.3 27.0,167.5 Q31.0,163.3 32.0,153.4Z" fill="#00FFB2"/>
<path d="M51.0,153.4 Q52.0,163.3 56.0,167.5 Q60.0,163.3 61.0,153.4Z" fill="#00FFB2"/>
<path d="M136.0,153.4 Q137.4,163.3 143.0,167.5 Q148.6,163.3 150.0,153.4Z" fill="#00FFB2"/>
<path d="M168.0,153.4 Q169.4,163.3 175.0,167.5 Q180.6,163.3 182.0,153.4Z" fill="#00FFB2"/>
<path d="M200.0,153.4 Q201.4,163.3 207.0,167.5 Q212.6,163.3 214.0,153.4Z" fill="#00FFB2"/>
<path d="M286.0,153.4 Q287.4,163.3 293.0,167.5 Q298.6,163.3 300.0,153.4Z" fill="#00FFB2"/>
<path d="M318.0,153.4 Q319.4,163.3 325.0,167.5 Q330.6,163.3 332.0,153.4Z" fill="#00FFB2"/>
<path d="M350.0,153.4 Q351.4,163.3 357.0,167.5 Q362.6,163.3 364.0,153.4Z" fill="#00FFB2"/>
<path d="M439.0,153.4 Q440.0,163.3 444.0,167.5 Q448.0,163.3 449.0,153.4Z" fill="#00FFB2"/>
<path d="M468.0,153.4 Q469.0,163.3 473.0,167.5 Q477.0,163.3 478.0,153.4Z" fill="#00FFB2"/>
<path d="M22.0,197.2 Q23.0,187.3 27.0,183.1 Q31.0,187.3 32.0,197.2Z" fill="#00FFB2"/>
<path d="M51.0,197.2 Q52.0,187.3 56.0,183.1 Q60.0,187.3 61.0,197.2Z" fill="#00FFB2"/>
<path d="M136.0,197.2 Q137.4,187.3 143.0,183.1 Q148.6,187.3 150.0,197.2Z" fill="#00FFB2"/>
<path d="M168.0,197.2 Q169.4,187.3 175.0,183.1 Q180.6,187.3 182.0,197.2Z" fill="#00FFB2"/>
<path d="M200.0,197.2 Q201.4,187.3 207.0,183.1 Q212.6,187.3 214.0,197.2Z" fill="#00FFB2"/>
<path d="M286.0,197.2 Q287.4,187.3 293.0,183.1 Q298.6,187.3 300.0,197.2Z" fill="#00FFB2"/>
<path d="M318.0,197.2 Q319.4,187.3 325.0,183.1 Q330.6,187.3 332.0,197.2Z" fill="#00FFB2"/>
<path d="M350.0,197.2 Q351.4,187.3 357.0,183.1 Q362.6,187.3 364.0,197.2Z" fill="#00FFB2"/>
<path d="M439.0,197.2 Q440.0,187.3 444.0,183.1 Q448.0,187.3 449.0,197.2Z" fill="#00FFB2"/>
<path d="M468.0,197.2 Q469.0,187.3 473.0,183.1 Q477.0,187.3 478.0,197.2Z" fill="#00FFB2"/>
<path d="M22.0,225.5 Q23.0,216.9 27.0,213.2 Q31.0,216.9 32.0,225.5Z" fill="#00FFB2"/>
<path d="M51.0,225.5 Q52.0,216.9 56.0,213.2 Q60.0,216.9 61.0,225.5Z" fill="#00FFB2"/>
<path d="M136.0,225.5 Q137.4,216.9 143.0,213.2 Q148.6,216.9 150.0,225.5Z" fill="#00FFB2"/>
<path d="M168.0,225.5 Q169.4,216.9 175.0,213.2 Q180.6,216.9 182.0,225.5Z" fill="#00FFB2"/>
<path d="M200.0,225.5 Q201.4,216.9 207.0,213.2 Q212.6,216.9 214.0,225.5Z" fill="#00FFB2"/>
<path d="M286.0,225.5 Q287.4,216.9 293.0,213.2 Q298.6,216.9 300.0,225.5Z" fill="#00FFB2"/>
<path d="M318.0,225.5 Q319.4,216.9 325.0,213.2 Q330.6,216.9 332.0,225.5Z" fill="#00FFB2"/>
<path d="M350.0,225.5 Q351.4,216.9 357.0,213.2 Q362.6,216.9 364.0,225.5Z" fill="#00FFB2"/>
<path d="M439.0,225.5 Q440.0,216.9 444.0,213.2 Q448.0,216.9 449.0,225.5Z" fill="#00FFB2"/>
<path d="M468.0,225.5 Q469.0,216.9 473.0,213.2 Q477.0,216.9 478.0,225.5Z" fill="#00FFB2"/>
<path d="M15,249.95 C15,243.45 23,244.45 29,244.95 L68,249.95 L29,254.95 C23,255.45 15,256.45 15,249.95Z" fill="#00FFB2"/>
<path d="M21,245.95 L34,249.95 L21,253.95Z" fill="#00FF00"/>
<path d="M130,249.95 Q175,238.95 242,249.95 Q175,260.95 130,249.95Z" fill="#00FFB2"/>
<path d="M168,249.95 L175,245.64999999999998 L182,249.95 L175,254.25Z" fill="#00FF00"/>
<path d="M260,249.95 Q325,238.95 390,249.95 Q325,260.95 260,249.95Z" fill="#00FFB2"/>
<path d="M318,249.95 L325,245.64999999999998 L332,249.95 L325,254.25Z" fill="#00FF00"/>
<path d="M485,249.95 C485,243.45 477,244.45 471,244.95 L412,249.95 L471,254.95 C477,255.45 485,256.45 485,249.95Z" fill="#00FFB2"/>
<path d="M479,245.95 L466,249.95 L479,253.95Z" fill="#00FF00"/>
<path d="M22.0,274.4 Q23.0,283.0 27.0,286.7 Q31.0,283.0 32.0,274.4Z" fill="#00FFB2"/>
<path d="M51.0,274.4 Q52.0,283.0 56.0,286.7 Q60.0,283.0 61.0,274.4Z" fill="#00FFB2"/>
<path d="M136.0,274.4 Q137.4,283.0 143.0,286.7 Q148.6,283.0 150.0,274.4Z" fill="#00FFB2"/>
<path d="M168.0,274.4 Q169.4,283.0 175.0,286.7 Q180.6,283.0 182.0,274.4Z" fill="#00FFB2"/>
<path d="M200.0,274.4 Q201.4,283.0 207.0,286.7 Q212.6,283.0 214.0,274.4Z" fill="#00FFB2"/>
<path d="M286.0,274.4 Q287.4,283.0 293.0,286.7 Q298.6,283.0 300.0,274.4Z" fill="#00FFB2"/>
<path d="M318.0,274.4 Q319.4,283.0 325.0,286.7 Q330.6,283.0 332.0,274.4Z" fill="#00FFB2"/>
<path d="M350.0,274.4 Q351.4,283.0 357.0,286.7 Q362.6,283.0 364.0,274.4Z" fill="#00FFB2"/>
<path d="M439.0,274.4 Q440.0,283.0 444.0,286.7 Q448.0,283.0 449.0,274.4Z" fill="#00FFB2"/>
<path d="M468.0,274.4 Q469.0,283.0 473.0,286.7 Q477.0,283.0 478.0,274.4Z" fill="#00FFB2"/>
<path d="M22.0,302.7 Q23.0,312.6 27.0,316.8 Q31.0,312.6 32.0,302.7Z" fill="#00FFB2"/>
<path d="M51.0,302.7 Q52.0,312.6 56.0,316.8 Q60.0,312.6 61.0,302.7Z" fill="#00FFB2"/>
<path d="M136.0,302.7 Q137.4,312.6 143.0,316.8 Q148.6,312.6 150.0,302.7Z" fill="#00FFB2"/>
<path d="M168.0,302.7 Q169.4,312.6 175.0,316.8 Q180.6,312.6 182.0,302.7Z" fill="#00FFB2"/>
<path d="M200.0,302.7 Q201.4,312.6 207.0,316.8 Q212.6,312.6 214.0,302.7Z" fill="#00FFB2"/>
<path d="M286.0,302.7 Q287.4,312.6 293.0,316.8 Q298.6,312.6 300.0,302.7Z" fill="#00FFB2"/>
<path d="M318.0,302.7 Q319.4,312.6 325.0,316.8 Q330.6,312.6 332.0,302.7Z" fill="#00FFB2"/>
<path d="M350.0,302.7 Q351.4,312.6 357.0,316.8 Q362.6,312.6 364.0,302.7Z" fill="#00FFB2"/>
<path d="M439.0,302.7 Q440.0,312.6 444.0,316.8 Q448.0,312.6 449.0,302.7Z" fill="#00FFB2"/>
<path d="M468.0,302.7 Q469.0,312.6 473.0,316.8 Q477.0,312.6 478.0,302.7Z" fill="#00FFB2"/>
<path d="M22.0,346.5 Q23.0,336.6 27.0,332.4 Q31.0,336.6 32.0,346.5Z" fill="#00FFB2"/>
<path d="M51.0,346.5 Q52.0,336.6 56.0,332.4 Q60.0,336.6 61.0,346.5Z" fill="#00FFB2"/>
<path d="M136.0,346.5 Q137.4,336.6 143.0,332.4 Q148.6,336.6 150.0,346.5Z" fill="#00FFB2"/>
<path d="M168.0,346.5 Q169.4,336.6 175.0,332.4 Q180.6,336.6 182.0,346.5Z" fill="#00FFB2"/>
<path d="M200.0,346.5 Q201.4,336.6 207.0,332.4 Q212.6,336.6 214.0,346.5Z" fill="#00FFB2"/>
<path d="M286.0,346.5 Q287.4,336.6 293.0,332.4 Q298.6,336.6 300.0,346.5Z" fill="#00FFB2"/>
<path d="M318.0,346.5 Q319.4,336.6 325.0,332.4 Q330.6,336.6 332.0,346.5Z" fill="#00FFB2"/>
<path d="M350.0,346.5 Q351.4,336.6 357.0,332.4 Q362.6,336.6 364.0,346.5Z" fill="#00FFB2"/>
<path d="M439.0,346.5 Q440.0,336.6 444.0,332.4 Q448.0,336.6 449.0,346.5Z" fill="#00FFB2"/>
<path d="M468.0,346.5 Q469.0,336.6 473.0,332.4 Q477.0,336.6 478.0,346.5Z" fill="#00FFB2"/>
<path d="M22.0,374.8 Q23.0,366.2 27.0,362.5 Q31.0,366.2 32.0,374.8Z" fill="#00FFB2"/>
<path d="M51.0,374.8 Q52.0,366.2 56.0,362.5 Q60.0,366.2 61.0,374.8Z" fill="#00FFB2"/>
<path d="M136.0,374.8 Q137.4,366.2 143.0,362.5 Q148.6,366.2 150.0,374.8Z" fill="#00FFB2"/>
<path d="M168.0,374.8 Q169.4,366.2 175.0,362.5 Q180.6,366.2 182.0,374.8Z" fill="#00FFB2"/>
<path d="M200.0,374.8 Q201.4,366.2 207.0,362.5 Q212.6,366.2 214.0,374.8Z" fill="#00FFB2"/>
<path d="M286.0,374.8 Q287.4,366.2 293.0,362.5 Q298.6,366.2 300.0,374.8Z" fill="#00FFB2"/>
<path d="M318.0,374.8 Q319.4,366.2 325.0,362.5 Q330.6,366.2 332.0,374.8Z" fill="#00FFB2"/>
<path d="M350.0,374.8 Q351.4,366.2 357.0,362.5 Q362.6,366.2 364.0,374.8Z" fill="#00FFB2"/>
<path d="M439.0,374.8 Q440.0,366.2 444.0,362.5 Q448.0,366.2 449.0,374.8Z" fill="#00FFB2"/>
<path d="M468.0,374.8 Q469.0,366.2 473.0,362.5 Q477.0,366.2 478.0,374.8Z" fill="#00FFB2"/>
<path d="M15,399.25 C15,392.75 23,393.75 29,394.25 L68,399.25 L29,404.25 C23,404.75 15,405.75 15,399.25Z" fill="#00FFB2"/>
<path d="M21,395.25 L34,399.25 L21,403.25Z" fill="#00FF00"/>
<path d="M130,399.25 Q175,388.25 242,399.25 Q175,410.25 130,399.25Z" fill="#00FFB2"/>
<path d="M168,399.25 L175,394.95 L182,399.25 L175,403.55Z" fill="#00FF00"/>
<path d="M260,399.25 Q325,388.25 390,399.25 Q325,410.25 260,399.25Z" fill="#00FFB2"/>
<path d="M318,399.25 L325,394.95 L332,399.25 L325,403.55Z" fill="#00FF00"/>
<path d="M485,399.25 C485,392.75 477,393.75 471,394.25 L412,399.25 L471,404.25 C477,404.75 485,405.75 485,399.25Z" fill="#00FFB2"/>
<path d="M479,395.25 L466,399.25 L479,403.25Z" fill="#00FF00"/>
<path d="M22.0,423.7 Q23.0,432.3 27.0,436.0 Q31.0,432.3 32.0,423.7Z" fill="#00FFB2"/>
<path d="M51.0,423.7 Q52.0,432.3 56.0,436.0 Q60.0,432.3 61.0,423.7Z" fill="#00FFB2"/>
<path d="M136.0,423.7 Q137.4,432.3 143.0,436.0 Q148.6,432.3 150.0,423.7Z" fill="#00FFB2"/>
<path d="M168.0,423.7 Q169.4,432.3 175.0,436.0 Q180.6,432.3 182.0,423.7Z" fill="#00FFB2"/>
<path d="M200.0,423.7 Q201.4,432.3 207.0,436.0 Q212.6,432.3 214.0,423.7Z" fill="#00FFB2"/>
<path d="M286.0,423.7 Q287.4,432.3 293.0,436.0 Q298.6,432.3 300.0,423.7Z" fill="#00FFB2"/>
<path d="M318.0,423.7 Q319.4,432.3 325.0,436.0 Q330.6,432.3 332.0,423.7Z" fill="#00FFB2"/>
<path d="M350.0,423.7 Q351.4,432.3 357.0,436.0 Q362.6,432.3 364.0,423.7Z" fill="#00FFB2"/>
<path d="M439.0,423.7 Q440.0,432.3 444.0,436.0 Q448.0,432.3 449.0,423.7Z" fill="#00FFB2"/>
<path d="M468.0,423.7 Q469.0,432.3 473.0,436.0 Q477.0,432.3 478.0,423.7Z" fill="#00FFB2"/>
<path d="M22.0,452.0 Q23.0,462.4 27.0,466.9 Q31.0,462.4 32.0,452.0Z" fill="#00FFB2"/>
<path d="M51.0,452.0 Q52.0,462.4 56.0,466.9 Q60.0,462.4 61.0,452.0Z" fill="#00FFB2"/>
<path d="M136.0,452.0 Q137.4,462.4 143.0,466.9 Q148.6,462.4 150.0,452.0Z" fill="#00FFB2"/>
<path d="M168.0,452.0 Q169.4,462.4 175.0,466.9 Q180.6,462.4 182.0,452.0Z" fill="#00FFB2"/>
<path d="M200.0,452.0 Q201.4,462.4 207.0,466.9 Q212.6,462.4 214.0,452.0Z" fill="#00FFB2"/>
<path d="M286.0,452.0 Q287.4,462.4 293.0,466.9 Q298.6,462.4 300.0,452.0Z" fill="#00FFB2"/>
<path d="M318.0,452.0 Q319.4,462.4 325.0,466.9 Q330.6,462.4 332.0,452.0Z" fill="#00FFB2"/>
<path d="M350.0,452.0 Q351.4,462.4 357.0,466.9 Q362.6,462.4 364.0,452.0Z" fill="#00FFB2"/>
<path d="M439.0,452.0 Q440.0,462.4 444.0,466.9 Q448.0,462.4 449.0,452.0Z" fill="#00FFB2"/>
<path d="M468.0,452.0 Q469.0,462.4 473.0,466.9 Q477.0,462.4 478.0,452.0Z" fill="#00FFB2"/>
<path d="M0,0 L0,19 C10,22 25,23.0 50,23.0 L450,23.0 C475,23.0 490,22 500,19 L500,0 Z" fill="#00FFFF"/>
<path d="M0,0 L0,19 C10,22 25,23.0 50,23.0 L450,23.0 C475,23.0 490,22 500,19 L500,0 Z" fill="#00FFFF" transform="matrix(1,0,0,-1,0,500)"/>
<path d="M0,0 L0,13.6 C12,17.5 25,20.8 55,20.8 L445,20.8 C475,20.8 488,17.5 500,13.6 L500,0 Z" fill="#00FFB2"/>
<path d="M0,0 L0,13.6 C12,17.5 25,20.8 55,20.8 L445,20.8 C475,20.8 488,17.5 500,13.6 L500,0 Z" fill="#00FFB2" transform="matrix(1,0,0,-1,0,500)"/>
<path d="M0,0 L0,7.3 C12,13 22,17.6 55,17.6 L445,17.6 C478,17.6 488,13 500,7.3 L500,0 Z" fill="#00FF00"/>
<path d="M0,0 L0,7.3 C12,13 22,17.6 55,17.6 L445,17.6 C478,17.6 488,13 500,7.3 L500,0 Z" fill="#00FF00" transform="matrix(1,0,0,-1,0,500)"/>
<path d="M0,0 L7.5,0 C16,9 24,14.3 55,14.3 L445,14.3 C476,14.3 484,9 492.5,0 L500,0 Z" fill="#B2FF00"/>
<path d="M0,0 L7.5,0 C16,9 24,14.3 55,14.3 L445,14.3 C476,14.3 484,9 492.5,0 L500,0 Z" fill="#B2FF00" transform="matrix(1,0,0,-1,0,500)"/>
<path d="M0,0 L15.6,0 C22,6 32,10.4 60,10.4 L440,10.4 C468,10.4 478,6 484.4,0 L500,0 Z" fill="#FFFF00"/>
<path d="M0,0 L15.6,0 C22,6 32,10.4 60,10.4 L440,10.4 C468,10.4 478,6 484.4,0 L500,0 Z" fill="#FFFF00" transform="matrix(1,0,0,-1,0,500)"/>
<path d="M0,0 L24,0 C30,3.5 40,6.1 65,6.1 L435,6.1 C460,6.1 470,3.5 476,0 L500,0 Z" fill="#FFB200"/>
<path d="M0,0 L24,0 C30,3.5 40,6.1 65,6.1 L435,6.1 C460,6.1 470,3.5 476,0 L500,0 Z" fill="#FFB200" transform="matrix(1,0,0,-1,0,500)"/>
<rect x="62.0" y="0.0" width="13.0" height="1.8" fill="#FF0000"/>
<rect x="62.0" y="498.2" width="13.0" height="1.8" fill="#FF0000"/>
<rect x="95.0" y="0.0" width="27.0" height="1.8" fill="#FF0000"/>
<rect x="95.0" y="498.2" width="27.0" height="1.8" fill="#FF0000"/>
<rect x="140.0" y="0.0" width="38.0" height="1.8" fill="#FF0000"/>
<rect x="140.0" y="498.2" width="38.0" height="1.8" fill="#FF0000"/>
<rect x="198.0" y="0.0" width="64.0" height="1.8" fill="#FF0000"/>
<rect x="198.0" y="498.2" width="64.0" height="1.8" fill="#FF0000"/>
<rect x="280.0" y="0.0" width="52.0" height="1.8" fill="#FF0000"/>
<rect x="280.0" y="498.2" width="52.0" height="1.8" fill="#FF0000"/>
<rect x="350.0" y="0.0" width="32.0" height="1.8" fill="#FF0000"/>
<rect x="350.0" y="498.2" width="32.0" height="1.8" fill="#FF0000"/>
<rect x="396.0" y="0.0" width="24.0" height="1.8" fill="#FF0000"/>
<rect x="396.0" y="498.2" width="24.0" height="1.8" fill="#FF0000"/>
<rect x="428.0" y="0.0" width="12.0" height="1.8" fill="#FF0000"/>
<rect x="428.0" y="498.2" width="12.0" height="1.8" fill="#FF0000"/>
</g>
<rect x="0" y="0" width="500" height="500" fill="none" stroke="#F0F0F0" stroke-width="1.2"/>
</g>
<path d="M197.3,519.6 L198.3,551 L203.5,548.5Z" fill="#B2E000"/>
<path d="M199,549.5 L194,554.5" stroke="#10A0F0" stroke-width="1.6"/>
<rect x="85.8" y="571.7" width="708.1" height="18" fill="#C4C8C4"/>
<path d="M85.8,589.7 L88.9,587.8 L790.8,587.8 L790.8,573.9 L793.9,571.7 L793.9,589.7Z" fill="#687070"/>
<rect x="88.90" y="573.9" width="75.10" height="13.9" fill="#0000FF"/>
<rect x="164.00" y="573.9" width="78.57" height="13.9" fill="#00B2FF"/>
<rect x="242.57" y="573.9" width="78.57" height="13.9" fill="#00FFFF"/>
<rect x="321.14" y="573.9" width="78.57" height="13.9" fill="#00FFB2"/>
<rect x="399.71" y="573.9" width="78.57" height="13.9" fill="#00FF00"/>
<rect x="478.28" y="573.9" width="78.57" height="13.9" fill="#B2FF00"/>
<rect x="556.85" y="573.9" width="78.57" height="13.9" fill="#FFFF00"/>
<rect x="635.42" y="573.9" width="78.57" height="13.9" fill="#FFB200"/>
<rect x="713.99" y="573.9" width="76.81" height="13.9" fill="#FF0000"/>
<rect x="85.40" y="589.7" width="1.2" height="3" fill="#989898"/>
<rect x="163.40" y="589.7" width="1.2" height="3" fill="#989898"/>
<rect x="241.97" y="589.7" width="1.2" height="3" fill="#989898"/>
<rect x="320.54" y="589.7" width="1.2" height="3" fill="#989898"/>
<rect x="399.11" y="589.7" width="1.2" height="3" fill="#989898"/>
<rect x="477.68" y="589.7" width="1.2" height="3" fill="#989898"/>
<rect x="556.25" y="589.7" width="1.2" height="3" fill="#989898"/>
<rect x="634.82" y="589.7" width="1.2" height="3" fill="#989898"/>
<rect x="713.39" y="589.7" width="1.2" height="3" fill="#989898"/>
<rect x="792.70" y="589.7" width="1.2" height="3" fill="#989898"/>
</svg>
<div class="t h" style="left:24.7px;top:22.8px">NODAL SOLUTION</div>
<div class="t h" style="left:24.7px;top:48.2px">STEP=1</div>
<div class="t h" style="left:24.7px;top:64.7px">SUB =1</div>
<div class="t h" style="left:24.7px;top:81.2px">TIME=1</div>
<div class="t h" style="left:24.7px;top:97.7px">TEMP     (AVG)</div>
<div class="t h" style="left:24.7px;top:114.3px">RSYS=0</div>
<div class="t h" style="left:24.7px;top:130.8px">SMN =3.81218</div>
<div class="t h" style="left:24.7px;top:147.4px">SMX =23.3847</div>
<div class="t h" style="left:758.2px;top:50.2px">DEC  2 2017</div>
<div class="t h" style="left:758.2px;top:65.8px">   20:47:36</div>
<div class="t l" style="left:85.5px;top:590.2px">3.81218</div>
<div class="t l" style="left:164.0px;top:606.2px">5.98691</div>
<div class="t l" style="left:242.0px;top:590.2px">8.16163</div>
<div class="t l" style="left:320.5px;top:606.2px">10.3364</div>
<div class="t l" style="left:399.0px;top:590.2px">12.5111</div>
<div class="t l" style="left:477.5px;top:606.2px">14.6858</div>
<div class="t l" style="left:556.0px;top:590.2px">16.8605</div>
<div class="t l" style="left:634.5px;top:606.2px">19.0352</div>
<div class="t l" style="left:713.0px;top:590.2px">21.21</div>
<div class="t l" style="left:791.5px;top:606.2px">23.3847</div>
<div class="t l" style="left:12.5px;top:627.0px">DEICING</div>
<div class="t" style="left:13px;top:4.5px;font-size:17px;color:#10A8A8">1</div>
<div class="t" style="left:414.5px;top:24px;font-size:13.5px;transform:scaleX(0.85);transform-origin:left top;color:#E8E8E8;font-family:'Liberation Serif',serif">MX</div>
<div class="t" style="left:197.5px;top:501px;font-size:14.5px;color:#A8C000;font-family:'Liberation Serif',serif">Y</div>
<div class="t" style="left:195.5px;top:536px;font-size:14.5px;color:#20A0E8;font-family:'Liberation Serif',serif">Z</div>
<div class="t" style="left:230.5px;top:532px;font-size:14.5px;color:#F0F0D0;font-family:'Liberation Serif',serif">X</div>
<div class="t" style="left:203.5px;top:302px;font-size:12.5px;transform:scaleX(0.85);transform-origin:left top;color:#E8E8E8;font-family:'Liberation Serif',serif">MN</div>
<div class="t" style="left:803.5px;top:4px;font-size:21.6px;font-weight:bold;color:#FFFFFF;font-family:'Liberation Sans',sans-serif;transform:scaleX(0.9);transform-origin:left top">ANSYS</div>
<div class="t" style="left:835px;top:26.5px;font-size:11.6px;letter-spacing:1px;color:#D0D0D0;font-family:'Liberation Sans',sans-serif">R18.0</div>
</body></html>
